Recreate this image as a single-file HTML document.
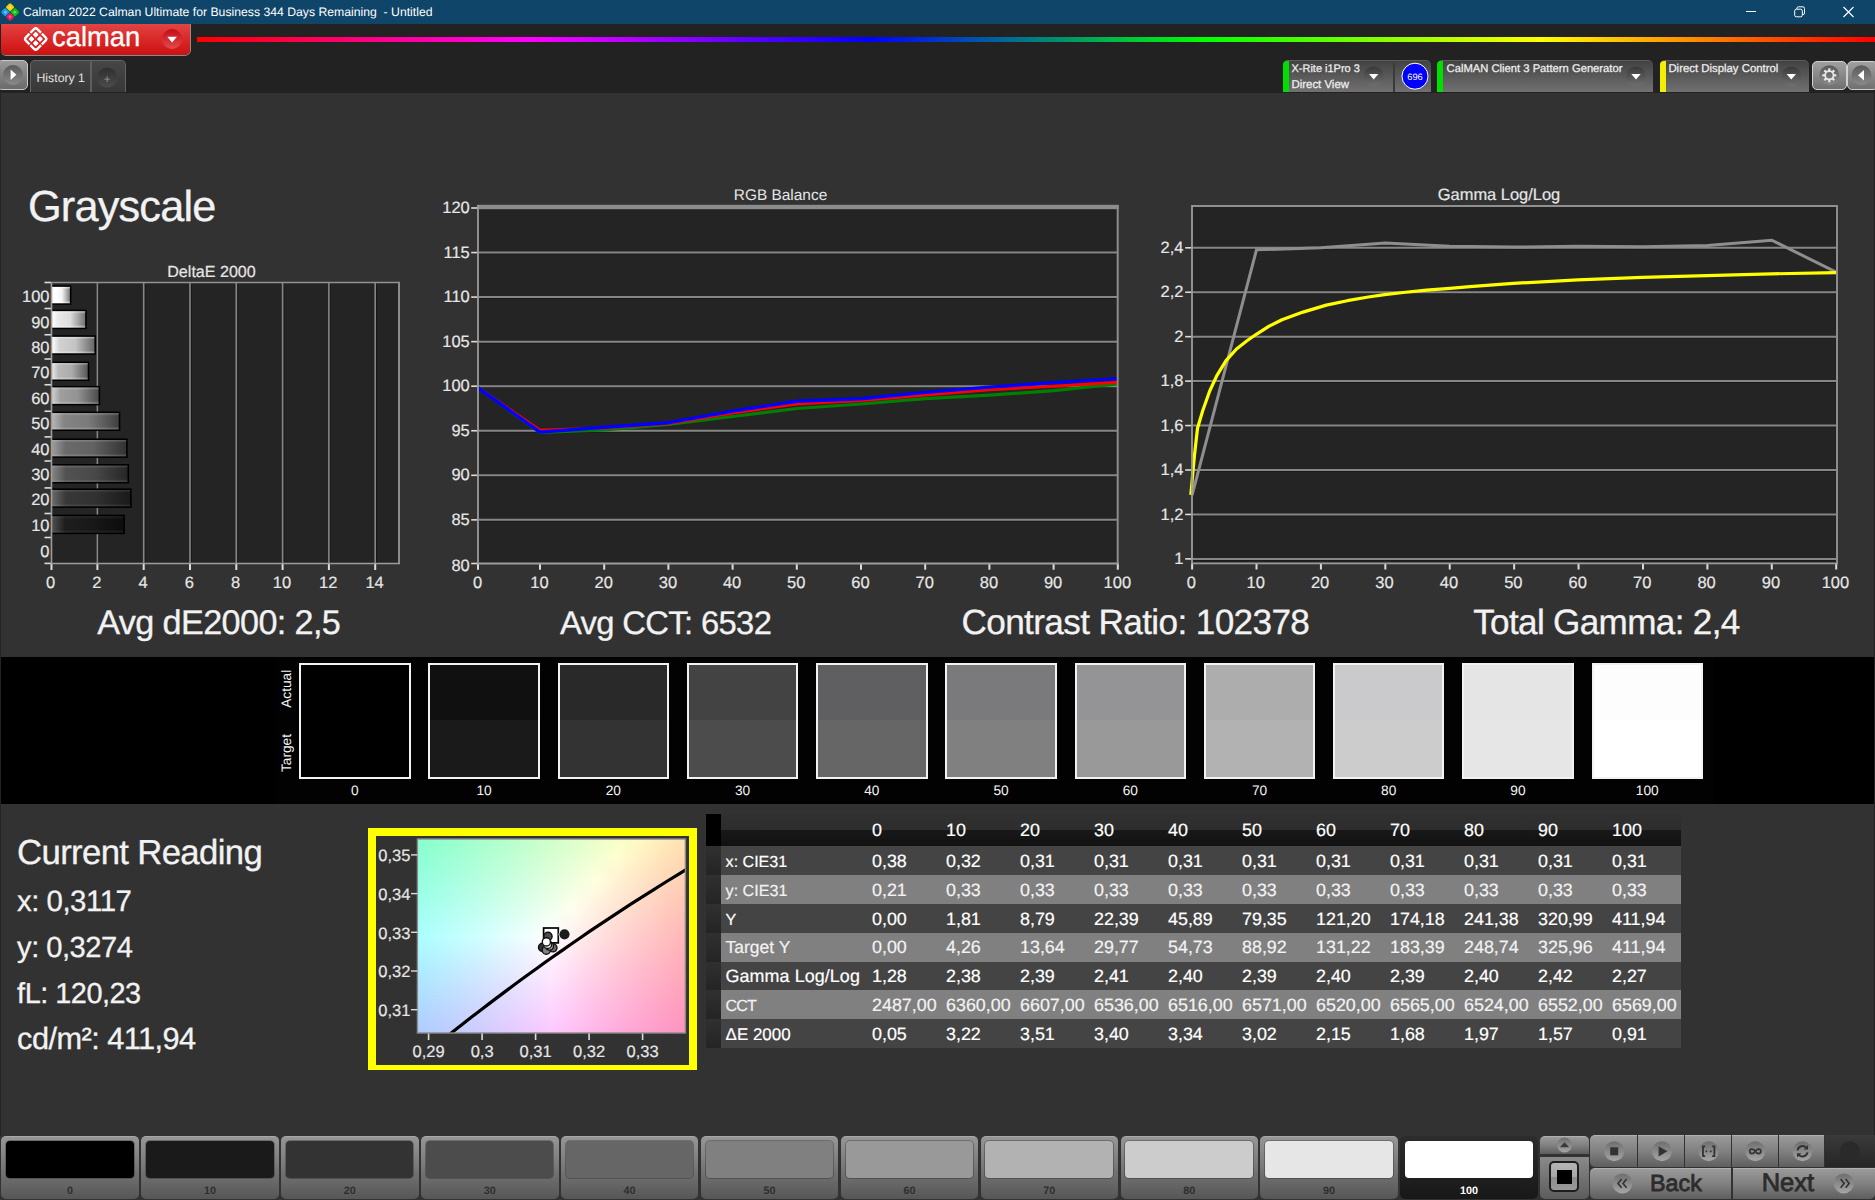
<!DOCTYPE html>
<html lang="en"><head><meta charset="utf-8"><title>Calman 2022 - Grayscale</title>
<style>
html,body{margin:0;padding:0;background:#323232;}
body{width:1875px;height:1200px;overflow:hidden;position:relative;font-family:"Liberation Sans",sans-serif;text-rendering:geometricPrecision;}
#app{position:absolute;left:0;top:0;width:1875px;height:1200px;overflow:hidden;}
#app div{position:absolute;}
.t{position:absolute;white-space:nowrap;line-height:1;}
#gfx{position:absolute;left:0;top:0;font-family:"Liberation Sans",sans-serif;}
#gfx text{white-space:pre;}
</style></head>
<body><div id="app">
<div class="titlebar" style="left:0.00px;top:0.00px;width:1875.00px;height:24.00px;background:#0f4568;"></div>
<div class="toolbar" style="left:0.00px;top:24.00px;width:1875.00px;height:69.00px;background:#222222;"></div>
<div style="left:197.00px;top:36.90px;width:1678.00px;height:5.60px;background:linear-gradient(90deg,#ff0000 0%,#ff00ff 20%,#0000ff 40%,#00ff00 60%,#ffff00 80%,#ff0000 100%);"></div>
<div class="logo-btn" style="left:1.00px;top:24.00px;width:188.60px;height:31.30px;background:linear-gradient(180deg,#e24444 0%,#da2a2a 45%,#cc1212 100%);border-radius:0 0 5px 5px;box-shadow:0 1px 0 #808c92, 1px 0 0 #9a8888;"></div>
<div style="left:-3.00px;top:60.00px;width:31.00px;height:29.50px;background:linear-gradient(180deg,#9a9a9a,#6a6a6a);border-radius:5px;border:1px solid #c8c8c8;box-sizing:border-box;"></div>
<div style="left:29.80px;top:59.80px;width:96.50px;height:32.40px;background:linear-gradient(180deg,#464646 0%,#383838 100%);border-radius:5px 5px 0 0;border:1px solid #646464;border-bottom:none;box-sizing:border-box;"></div>
<div style="left:90.00px;top:60.50px;width:1.60px;height:31.50px;background:#5e5e5e;"></div>
<div style="left:1282.50px;top:60.00px;width:148.00px;height:32.00px;background:linear-gradient(180deg,#424242 0%,#5a5a5a 50%,#717171 100%);border-radius:5px 5px 0 0;border-top:1px solid #5c5c5c;box-sizing:border-box;"></div>
<div style="left:1282.50px;top:60.50px;width:6.00px;height:31.50px;background:#00e000;border-radius:4px 0 0 0;"></div>
<div style="left:1393.00px;top:63.00px;width:1.50px;height:29.00px;background:#3a3a3a;"></div>
<div style="left:1437.20px;top:60.00px;width:216.00px;height:32.00px;background:linear-gradient(180deg,#424242 0%,#5a5a5a 50%,#717171 100%);border-radius:5px 5px 0 0;border-top:1px solid #5c5c5c;box-sizing:border-box;"></div>
<div style="left:1437.20px;top:60.50px;width:6.00px;height:31.50px;background:#00e000;border-radius:4px 0 0 0;"></div>
<div style="left:1660.00px;top:60.00px;width:148.50px;height:32.00px;background:linear-gradient(180deg,#424242 0%,#5a5a5a 50%,#717171 100%);border-radius:5px 5px 0 0;border-top:1px solid #5c5c5c;box-sizing:border-box;"></div>
<div style="left:1660.00px;top:60.50px;width:6.00px;height:31.50px;background:#f0f000;border-radius:4px 0 0 0;"></div>
<div style="left:1812.00px;top:60.50px;width:35.00px;height:29.50px;background:linear-gradient(180deg,#a0a0a0,#707070);border-radius:5px;border:1px solid #d0d0d0;box-sizing:border-box;"></div>
<div style="left:1847.00px;top:60.50px;width:31.00px;height:29.50px;background:linear-gradient(180deg,#a0a0a0,#707070);border-radius:5px;border:1px solid #d0d0d0;box-sizing:border-box;"></div>
<div class="content" style="left:0.00px;top:93.00px;width:1875.00px;height:1043.00px;background:#323232;border-left:1px solid #242424;border-right:1px solid #222222;box-sizing:border-box;"></div>
<div class="strip" style="left:1.00px;top:656.70px;width:1873.00px;height:147.30px;background:#000000;"></div>
<div style="left:276.00px;top:657.00px;width:1437.50px;height:147.00px;background:#020202;"></div>
<div class="patch" style="left:299.20px;top:663.00px;width:111.40px;height:115.60px;background:linear-gradient(180deg,#000000 0%,#000000 49.5%,#000000 49.5%,#000000 100%);border:2px solid #f2f2f2;box-sizing:border-box;"></div>
<div class="patch" style="left:428.43px;top:663.00px;width:111.40px;height:115.60px;background:linear-gradient(180deg,#101010 0%,#101010 49.5%,#1a1a1a 49.5%,#1a1a1a 100%);border:2px solid #f2f2f2;box-sizing:border-box;"></div>
<div class="patch" style="left:557.66px;top:663.00px;width:111.40px;height:115.60px;background:linear-gradient(180deg,#292929 0%,#292929 49.5%,#333333 49.5%,#333333 100%);border:2px solid #f2f2f2;box-sizing:border-box;"></div>
<div class="patch" style="left:686.89px;top:663.00px;width:111.40px;height:115.60px;background:linear-gradient(180deg,#434343 0%,#434343 49.5%,#4c4c4c 49.5%,#4c4c4c 100%);border:2px solid #f2f2f2;box-sizing:border-box;"></div>
<div class="patch" style="left:816.12px;top:663.00px;width:111.40px;height:115.60px;background:linear-gradient(180deg,#5f5f61 0%,#5f5f61 49.5%,#666666 49.5%,#666666 100%);border:2px solid #f2f2f2;box-sizing:border-box;"></div>
<div class="patch" style="left:945.35px;top:663.00px;width:111.40px;height:115.60px;background:linear-gradient(180deg,#7a7a7c 0%,#7a7a7c 49.5%,#808080 49.5%,#808080 100%);border:2px solid #f2f2f2;box-sizing:border-box;"></div>
<div class="patch" style="left:1074.58px;top:663.00px;width:111.40px;height:115.60px;background:linear-gradient(180deg,#949496 0%,#949496 49.5%,#999999 49.5%,#999999 100%);border:2px solid #f2f2f2;box-sizing:border-box;"></div>
<div class="patch" style="left:1203.81px;top:663.00px;width:111.40px;height:115.60px;background:linear-gradient(180deg,#adadad 0%,#adadad 49.5%,#b2b2b2 49.5%,#b2b2b2 100%);border:2px solid #f2f2f2;box-sizing:border-box;"></div>
<div class="patch" style="left:1333.04px;top:663.00px;width:111.40px;height:115.60px;background:linear-gradient(180deg,#cac9cb 0%,#cac9cb 49.5%,#cccccc 49.5%,#cccccc 100%);border:2px solid #f2f2f2;box-sizing:border-box;"></div>
<div class="patch" style="left:1462.27px;top:663.00px;width:111.40px;height:115.60px;background:linear-gradient(180deg,#e5e5e6 0%,#e5e5e6 49.5%,#e6e6e6 49.5%,#e6e6e6 100%);border:2px solid #f2f2f2;box-sizing:border-box;"></div>
<div class="patch" style="left:1591.50px;top:663.00px;width:111.40px;height:115.60px;background:linear-gradient(180deg,#fdfdfd 0%,#fdfdfd 49.5%,#ffffff 49.5%,#ffffff 100%);border:2px solid #f2f2f2;box-sizing:border-box;"></div>
<div class="cie-frame" style="left:368.00px;top:828.20px;width:328.80px;height:241.70px;background:#323232;border:solid #ffff00;border-width:8.2px 8.2px 5.2px 8.2px;box-sizing:border-box;"></div>
<div class="thead" style="left:705.60px;top:814.00px;width:975.70px;height:31.80px;background:linear-gradient(180deg,#303030 0%,#2d2d2d 50%,#181818 51%,#111111 100%);"></div>
<div style="left:705.60px;top:814.00px;width:15.40px;height:31.80px;background:#000;"></div>
<div class="trow" style="left:705.60px;top:845.80px;width:975.70px;height:28.93px;background:#444444;"></div>
<div style="left:705.60px;top:845.80px;width:15.40px;height:28.93px;background:linear-gradient(180deg,#303030,#242424);"></div>
<div class="trow" style="left:705.60px;top:874.73px;width:975.70px;height:28.93px;background:#808080;"></div>
<div style="left:705.60px;top:874.73px;width:15.40px;height:28.93px;background:linear-gradient(180deg,#303030,#242424);"></div>
<div class="trow" style="left:705.60px;top:903.66px;width:975.70px;height:28.93px;background:#444444;"></div>
<div style="left:705.60px;top:903.66px;width:15.40px;height:28.93px;background:linear-gradient(180deg,#303030,#242424);"></div>
<div class="trow" style="left:705.60px;top:932.59px;width:975.70px;height:28.93px;background:#808080;"></div>
<div style="left:705.60px;top:932.59px;width:15.40px;height:28.93px;background:linear-gradient(180deg,#303030,#242424);"></div>
<div class="trow" style="left:705.60px;top:961.51px;width:975.70px;height:28.93px;background:#444444;"></div>
<div style="left:705.60px;top:961.51px;width:15.40px;height:28.93px;background:linear-gradient(180deg,#303030,#242424);"></div>
<div class="trow" style="left:705.60px;top:990.44px;width:975.70px;height:28.93px;background:#808080;"></div>
<div style="left:705.60px;top:990.44px;width:15.40px;height:28.93px;background:linear-gradient(180deg,#303030,#242424);"></div>
<div class="trow" style="left:705.60px;top:1019.37px;width:975.70px;height:28.93px;background:#444444;"></div>
<div style="left:705.60px;top:1019.37px;width:15.40px;height:28.93px;background:linear-gradient(180deg,#303030,#242424);"></div>
<div class="sw" style="left:1.30px;top:1135.50px;width:137.60px;height:63.20px;background:linear-gradient(180deg,#969696 0%,#7a7a7a 45%,#565656 100%);border-radius:5px;border-top:1px solid #a8a8a8;box-sizing:border-box;"></div>
<div style="left:6.10px;top:1140.50px;width:127.50px;height:37.30px;background:#000000;border-radius:4px;box-shadow:0 0 0 1px rgba(0,0,0,.25);"></div>
<div class="sw" style="left:141.20px;top:1135.50px;width:137.60px;height:63.20px;background:linear-gradient(180deg,#969696 0%,#7a7a7a 45%,#565656 100%);border-radius:5px;border-top:1px solid #a8a8a8;box-sizing:border-box;"></div>
<div style="left:146.00px;top:1140.50px;width:127.50px;height:37.30px;background:#1a1a1a;border-radius:4px;box-shadow:0 0 0 1px rgba(0,0,0,.25);"></div>
<div class="sw" style="left:281.10px;top:1135.50px;width:137.60px;height:63.20px;background:linear-gradient(180deg,#969696 0%,#7a7a7a 45%,#565656 100%);border-radius:5px;border-top:1px solid #a8a8a8;box-sizing:border-box;"></div>
<div style="left:285.90px;top:1140.50px;width:127.50px;height:37.30px;background:#333333;border-radius:4px;box-shadow:0 0 0 1px rgba(0,0,0,.25);"></div>
<div class="sw" style="left:421.00px;top:1135.50px;width:137.60px;height:63.20px;background:linear-gradient(180deg,#969696 0%,#7a7a7a 45%,#565656 100%);border-radius:5px;border-top:1px solid #a8a8a8;box-sizing:border-box;"></div>
<div style="left:425.80px;top:1140.50px;width:127.50px;height:37.30px;background:#4c4c4c;border-radius:4px;box-shadow:0 0 0 1px rgba(0,0,0,.25);"></div>
<div class="sw" style="left:560.90px;top:1135.50px;width:137.60px;height:63.20px;background:linear-gradient(180deg,#969696 0%,#7a7a7a 45%,#565656 100%);border-radius:5px;border-top:1px solid #a8a8a8;box-sizing:border-box;"></div>
<div style="left:565.70px;top:1140.50px;width:127.50px;height:37.30px;background:#666666;border-radius:4px;box-shadow:0 0 0 1px rgba(0,0,0,.25);"></div>
<div class="sw" style="left:700.80px;top:1135.50px;width:137.60px;height:63.20px;background:linear-gradient(180deg,#969696 0%,#7a7a7a 45%,#565656 100%);border-radius:5px;border-top:1px solid #a8a8a8;box-sizing:border-box;"></div>
<div style="left:705.60px;top:1140.50px;width:127.50px;height:37.30px;background:#808080;border-radius:4px;box-shadow:0 0 0 1px rgba(0,0,0,.25);"></div>
<div class="sw" style="left:840.70px;top:1135.50px;width:137.60px;height:63.20px;background:linear-gradient(180deg,#969696 0%,#7a7a7a 45%,#565656 100%);border-radius:5px;border-top:1px solid #a8a8a8;box-sizing:border-box;"></div>
<div style="left:845.50px;top:1140.50px;width:127.50px;height:37.30px;background:#999999;border-radius:4px;box-shadow:0 0 0 1px rgba(0,0,0,.25);"></div>
<div class="sw" style="left:980.60px;top:1135.50px;width:137.60px;height:63.20px;background:linear-gradient(180deg,#969696 0%,#7a7a7a 45%,#565656 100%);border-radius:5px;border-top:1px solid #a8a8a8;box-sizing:border-box;"></div>
<div style="left:985.40px;top:1140.50px;width:127.50px;height:37.30px;background:#b2b2b2;border-radius:4px;box-shadow:0 0 0 1px rgba(0,0,0,.25);"></div>
<div class="sw" style="left:1120.50px;top:1135.50px;width:137.60px;height:63.20px;background:linear-gradient(180deg,#969696 0%,#7a7a7a 45%,#565656 100%);border-radius:5px;border-top:1px solid #a8a8a8;box-sizing:border-box;"></div>
<div style="left:1125.30px;top:1140.50px;width:127.50px;height:37.30px;background:#cccccc;border-radius:4px;box-shadow:0 0 0 1px rgba(0,0,0,.25);"></div>
<div class="sw" style="left:1260.40px;top:1135.50px;width:137.60px;height:63.20px;background:linear-gradient(180deg,#969696 0%,#7a7a7a 45%,#565656 100%);border-radius:5px;border-top:1px solid #a8a8a8;box-sizing:border-box;"></div>
<div style="left:1265.20px;top:1140.50px;width:127.50px;height:37.30px;background:#e6e6e6;border-radius:4px;box-shadow:0 0 0 1px rgba(0,0,0,.25);"></div>
<div class="sw sel" style="left:1400.30px;top:1135.50px;width:137.60px;height:63.20px;background:linear-gradient(180deg,#2c2c2c,#181818);border-radius:5px;"></div>
<div style="left:1405.10px;top:1140.50px;width:127.50px;height:37.30px;background:#ffffff;border-radius:4px;"></div>
<div style="left:1539.50px;top:1136.00px;width:49.50px;height:18.00px;background:linear-gradient(180deg,#9a9a9a 0%,#808080 50%,#5e5e5e 100%);border-radius:5px 5px 0 0;border-top:1px solid #b0b0b0;box-sizing:border-box;"></div>
<div style="left:1539.50px;top:1156.50px;width:49.50px;height:42.20px;background:linear-gradient(180deg,#8a8a8a,#5c5c5c);border-radius:0 0 5px 5px;"></div>
<div style="left:1548.60px;top:1161.30px;width:30.80px;height:30.80px;background:linear-gradient(180deg,#b4b4b4 0%,#a8a8a8 50%,#8c8c8c 51%,#9a9a9a 100%);border-radius:5px;border:2px solid #1e1e1e;box-sizing:border-box;"></div>
<div style="left:1557.00px;top:1170.30px;width:15.20px;height:13.80px;background:#000;"></div>
<div style="left:1590.30px;top:1135.00px;width:46.90px;height:31.50px;background:linear-gradient(180deg,#9a9a9a 0%,#808080 50%,#5e5e5e 100%);border-top:1px solid #b0b0b0;box-sizing:border-box;border-radius:5px 0 0 5px;"></div>
<div style="left:1638.40px;top:1135.00px;width:45.40px;height:31.50px;background:linear-gradient(180deg,#9a9a9a 0%,#808080 50%,#5e5e5e 100%);border-top:1px solid #b0b0b0;box-sizing:border-box;"></div>
<div style="left:1685.00px;top:1135.00px;width:45.50px;height:31.50px;background:linear-gradient(180deg,#9a9a9a 0%,#808080 50%,#5e5e5e 100%);border-top:1px solid #b0b0b0;box-sizing:border-box;"></div>
<div style="left:1731.70px;top:1135.00px;width:46.00px;height:31.50px;background:linear-gradient(180deg,#9a9a9a 0%,#808080 50%,#5e5e5e 100%);border-top:1px solid #b0b0b0;box-sizing:border-box;"></div>
<div style="left:1778.90px;top:1135.00px;width:45.00px;height:31.50px;background:linear-gradient(180deg,#9a9a9a 0%,#808080 50%,#5e5e5e 100%);border-top:1px solid #b0b0b0;box-sizing:border-box;"></div>
<div style="left:1825.10px;top:1135.00px;width:50.00px;height:31.50px;background:linear-gradient(180deg,#3a3a3a,#262626);"></div>
<div style="left:1590.30px;top:1168.20px;width:141.20px;height:30.60px;background:linear-gradient(180deg,#9a9a9a 0%,#808080 50%,#5e5e5e 100%);border-top:1px solid #b0b0b0;box-sizing:border-box;border-radius:5px 0 0 5px;"></div>
<div style="left:1733.00px;top:1168.20px;width:142.00px;height:30.60px;background:linear-gradient(180deg,#9a9a9a 0%,#808080 50%,#5e5e5e 100%);border-top:1px solid #b0b0b0;box-sizing:border-box;border-radius:0 0 5px 0;"></div>
<svg id="gfx" width="1875" height="1200" viewBox="0 0 1875 1200" ><defs><linearGradient id="gdd" x1="0" y1="0" x2="0" y2="1"><stop offset="0" stop-color="#c40d1a"/><stop offset="1" stop-color="#e24a4a"/></linearGradient><linearGradient id="gpc" x1="0" y1="0" x2="0" y2="1"><stop offset="0" stop-color="#5a5a5a"/><stop offset="1" stop-color="#8a8a8a"/></linearGradient><linearGradient id="gpl" x1="0" y1="0" x2="0" y2="1"><stop offset="0" stop-color="#2f2f2f"/><stop offset="1" stop-color="#4c4c4c"/></linearGradient><linearGradient id="gpc2" x1="0" y1="0" x2="0" y2="1"><stop offset="0" stop-color="#383838"/><stop offset="1" stop-color="#707070"/></linearGradient><linearGradient id="bevel" x1="0" y1="0" x2="0" y2="1"><stop offset="0" stop-color="#fff" stop-opacity="0.9"/><stop offset="0.16" stop-color="#fff" stop-opacity="0"/><stop offset="0.84" stop-color="#fff" stop-opacity="0"/><stop offset="1" stop-color="#fff" stop-opacity="0.9"/></linearGradient><linearGradient id="bg0" x1="0" y1="0" x2="1" y2="0"><stop offset="0" stop-color="#373737"/><stop offset="0.18" stop-color="#050505"/><stop offset="0.55" stop-color="#000000"/><stop offset="1" stop-color="#000000"/></linearGradient><linearGradient id="bg10" x1="0" y1="0" x2="1" y2="0"><stop offset="0" stop-color="#505050"/><stop offset="0.18" stop-color="#1e1e1e"/><stop offset="0.55" stop-color="#181818"/><stop offset="1" stop-color="#0d0d0d"/></linearGradient><linearGradient id="bg20" x1="0" y1="0" x2="1" y2="0"><stop offset="0" stop-color="#6a6a6a"/><stop offset="0.18" stop-color="#383838"/><stop offset="0.55" stop-color="#313131"/><stop offset="1" stop-color="#1a1a1a"/></linearGradient><linearGradient id="bg30" x1="0" y1="0" x2="1" y2="0"><stop offset="0" stop-color="#848484"/><stop offset="0.18" stop-color="#525252"/><stop offset="0.55" stop-color="#494949"/><stop offset="1" stop-color="#262626"/></linearGradient><linearGradient id="bg40" x1="0" y1="0" x2="1" y2="0"><stop offset="0" stop-color="#9d9d9d"/><stop offset="0.18" stop-color="#6b6b6b"/><stop offset="0.55" stop-color="#626262"/><stop offset="1" stop-color="#333333"/></linearGradient><linearGradient id="bg50" x1="0" y1="0" x2="1" y2="0"><stop offset="0" stop-color="#b6b6b6"/><stop offset="0.18" stop-color="#848484"/><stop offset="0.55" stop-color="#7a7a7a"/><stop offset="1" stop-color="#404040"/></linearGradient><linearGradient id="bg60" x1="0" y1="0" x2="1" y2="0"><stop offset="0" stop-color="#d0d0d0"/><stop offset="0.18" stop-color="#9e9e9e"/><stop offset="0.55" stop-color="#939393"/><stop offset="1" stop-color="#4c4c4c"/></linearGradient><linearGradient id="bg70" x1="0" y1="0" x2="1" y2="0"><stop offset="0" stop-color="#eaeaea"/><stop offset="0.18" stop-color="#b8b8b8"/><stop offset="0.55" stop-color="#ababab"/><stop offset="1" stop-color="#595959"/></linearGradient><linearGradient id="bg80" x1="0" y1="0" x2="1" y2="0"><stop offset="0" stop-color="#ffffff"/><stop offset="0.18" stop-color="#d1d1d1"/><stop offset="0.55" stop-color="#c4c4c4"/><stop offset="1" stop-color="#666666"/></linearGradient><linearGradient id="bg90" x1="0" y1="0" x2="1" y2="0"><stop offset="0" stop-color="#ffffff"/><stop offset="0.18" stop-color="#eaeaea"/><stop offset="0.55" stop-color="#dcdcdc"/><stop offset="1" stop-color="#737373"/></linearGradient><linearGradient id="bg100" x1="0" y1="0" x2="1" y2="0"><stop offset="0" stop-color="#ffffff"/><stop offset="0.18" stop-color="#ffffff"/><stop offset="0.55" stop-color="#f5f5f5"/><stop offset="1" stop-color="#808080"/></linearGradient><clipPath id="rclip"><rect x="477.7" y="207.8" width="640.0" height="355.7"/></clipPath><linearGradient id="c0"><stop offset="0.0000" stop-color="#87ffce"/><stop offset="0.0833" stop-color="#92ffce"/><stop offset="0.1667" stop-color="#9effcd"/><stop offset="0.2500" stop-color="#aaffcd"/><stop offset="0.3333" stop-color="#b6ffcc"/><stop offset="0.4167" stop-color="#c3ffcc"/><stop offset="0.5000" stop-color="#d0ffcb"/><stop offset="0.5833" stop-color="#ddffcb"/><stop offset="0.6667" stop-color="#eaffca"/><stop offset="0.7500" stop-color="#f8ffc9"/><stop offset="0.8333" stop-color="#fff8c3"/><stop offset="0.9167" stop-color="#ffebb9"/><stop offset="1.0000" stop-color="#ffdfaf"/></linearGradient><linearGradient id="c1"><stop offset="0.0000" stop-color="#88ffd0"/><stop offset="0.0833" stop-color="#94ffd0"/><stop offset="0.1667" stop-color="#9fffcf"/><stop offset="0.2500" stop-color="#abffcf"/><stop offset="0.3333" stop-color="#b8ffce"/><stop offset="0.4167" stop-color="#c4ffce"/><stop offset="0.5000" stop-color="#d1ffcd"/><stop offset="0.5833" stop-color="#dfffcc"/><stop offset="0.6667" stop-color="#ecffcc"/><stop offset="0.7500" stop-color="#faffcb"/><stop offset="0.8333" stop-color="#fff6c4"/><stop offset="0.9167" stop-color="#ffe9b9"/><stop offset="1.0000" stop-color="#ffdeaf"/></linearGradient><linearGradient id="c2"><stop offset="0.0000" stop-color="#89ffd2"/><stop offset="0.0833" stop-color="#95ffd1"/><stop offset="0.1667" stop-color="#a1ffd1"/><stop offset="0.2500" stop-color="#adffd0"/><stop offset="0.3333" stop-color="#b9ffd0"/><stop offset="0.4167" stop-color="#c6ffcf"/><stop offset="0.5000" stop-color="#d3ffcf"/><stop offset="0.5833" stop-color="#e0ffce"/><stop offset="0.6667" stop-color="#eeffce"/><stop offset="0.7500" stop-color="#fcffcd"/><stop offset="0.8333" stop-color="#fff4c4"/><stop offset="0.9167" stop-color="#ffe7b9"/><stop offset="1.0000" stop-color="#ffdcaf"/></linearGradient><linearGradient id="c3"><stop offset="0.0000" stop-color="#8bffd4"/><stop offset="0.0833" stop-color="#96ffd3"/><stop offset="0.1667" stop-color="#a2ffd3"/><stop offset="0.2500" stop-color="#afffd2"/><stop offset="0.3333" stop-color="#bbffd2"/><stop offset="0.4167" stop-color="#c8ffd1"/><stop offset="0.5000" stop-color="#d5ffd1"/><stop offset="0.5833" stop-color="#e2ffd0"/><stop offset="0.6667" stop-color="#f0ffd0"/><stop offset="0.7500" stop-color="#feffcf"/><stop offset="0.8333" stop-color="#fff2c4"/><stop offset="0.9167" stop-color="#ffe6ba"/><stop offset="1.0000" stop-color="#ffdab0"/></linearGradient><linearGradient id="c4"><stop offset="0.0000" stop-color="#8cffd6"/><stop offset="0.0833" stop-color="#98ffd5"/><stop offset="0.1667" stop-color="#a4ffd5"/><stop offset="0.2500" stop-color="#b0ffd4"/><stop offset="0.3333" stop-color="#bdffd4"/><stop offset="0.4167" stop-color="#caffd3"/><stop offset="0.5000" stop-color="#d7ffd3"/><stop offset="0.5833" stop-color="#e4ffd2"/><stop offset="0.6667" stop-color="#f2ffd2"/><stop offset="0.7500" stop-color="#fffed0"/><stop offset="0.8333" stop-color="#fff0c5"/><stop offset="0.9167" stop-color="#ffe4ba"/><stop offset="1.0000" stop-color="#ffd8b0"/></linearGradient><linearGradient id="c5"><stop offset="0.0000" stop-color="#8dffd8"/><stop offset="0.0833" stop-color="#99ffd7"/><stop offset="0.1667" stop-color="#a5ffd7"/><stop offset="0.2500" stop-color="#b2ffd6"/><stop offset="0.3333" stop-color="#beffd6"/><stop offset="0.4167" stop-color="#cbffd5"/><stop offset="0.5000" stop-color="#d9ffd5"/><stop offset="0.5833" stop-color="#e6ffd4"/><stop offset="0.6667" stop-color="#f4ffd4"/><stop offset="0.7500" stop-color="#fffcd1"/><stop offset="0.8333" stop-color="#ffeec5"/><stop offset="0.9167" stop-color="#ffe2ba"/><stop offset="1.0000" stop-color="#ffd6b0"/></linearGradient><linearGradient id="c6"><stop offset="0.0000" stop-color="#8fffd9"/><stop offset="0.0833" stop-color="#9bffd9"/><stop offset="0.1667" stop-color="#a7ffd9"/><stop offset="0.2500" stop-color="#b3ffd8"/><stop offset="0.3333" stop-color="#c0ffd8"/><stop offset="0.4167" stop-color="#cdffd7"/><stop offset="0.5000" stop-color="#dbffd7"/><stop offset="0.5833" stop-color="#e8ffd7"/><stop offset="0.6667" stop-color="#f6ffd6"/><stop offset="0.7500" stop-color="#fff9d1"/><stop offset="0.8333" stop-color="#ffecc5"/><stop offset="0.9167" stop-color="#ffe0bb"/><stop offset="1.0000" stop-color="#ffd5b1"/></linearGradient><linearGradient id="c7"><stop offset="0.0000" stop-color="#90ffdb"/><stop offset="0.0833" stop-color="#9cffdb"/><stop offset="0.1667" stop-color="#a8ffdb"/><stop offset="0.2500" stop-color="#b5ffda"/><stop offset="0.3333" stop-color="#c2ffda"/><stop offset="0.4167" stop-color="#cfffd9"/><stop offset="0.5000" stop-color="#ddffd9"/><stop offset="0.5833" stop-color="#eaffd9"/><stop offset="0.6667" stop-color="#f8ffd8"/><stop offset="0.7500" stop-color="#fff7d1"/><stop offset="0.8333" stop-color="#ffeac6"/><stop offset="0.9167" stop-color="#ffdebb"/><stop offset="1.0000" stop-color="#ffd3b1"/></linearGradient><linearGradient id="c8"><stop offset="0.0000" stop-color="#92ffdd"/><stop offset="0.0833" stop-color="#9effdd"/><stop offset="0.1667" stop-color="#aaffdd"/><stop offset="0.2500" stop-color="#b7ffdc"/><stop offset="0.3333" stop-color="#c4ffdc"/><stop offset="0.4167" stop-color="#d1ffdb"/><stop offset="0.5000" stop-color="#deffdb"/><stop offset="0.5833" stop-color="#ecffdb"/><stop offset="0.6667" stop-color="#fbffda"/><stop offset="0.7500" stop-color="#fff5d2"/><stop offset="0.8333" stop-color="#ffe8c6"/><stop offset="0.9167" stop-color="#ffdcbb"/><stop offset="1.0000" stop-color="#ffd1b2"/></linearGradient><linearGradient id="c9"><stop offset="0.0000" stop-color="#93ffdf"/><stop offset="0.0833" stop-color="#9fffdf"/><stop offset="0.1667" stop-color="#acffdf"/><stop offset="0.2500" stop-color="#b8ffde"/><stop offset="0.3333" stop-color="#c5ffde"/><stop offset="0.4167" stop-color="#d3ffde"/><stop offset="0.5000" stop-color="#e0ffdd"/><stop offset="0.5833" stop-color="#eeffdd"/><stop offset="0.6667" stop-color="#fdffdc"/><stop offset="0.7500" stop-color="#fff3d2"/><stop offset="0.8333" stop-color="#ffe6c6"/><stop offset="0.9167" stop-color="#ffdabc"/><stop offset="1.0000" stop-color="#ffcfb2"/></linearGradient><linearGradient id="c10"><stop offset="0.0000" stop-color="#95ffe1"/><stop offset="0.0833" stop-color="#a1ffe1"/><stop offset="0.1667" stop-color="#adffe1"/><stop offset="0.2500" stop-color="#baffe0"/><stop offset="0.3333" stop-color="#c7ffe0"/><stop offset="0.4167" stop-color="#d5ffe0"/><stop offset="0.5000" stop-color="#e2ffdf"/><stop offset="0.5833" stop-color="#f0ffdf"/><stop offset="0.6667" stop-color="#ffffdf"/><stop offset="0.7500" stop-color="#fff1d2"/><stop offset="0.8333" stop-color="#ffe4c7"/><stop offset="0.9167" stop-color="#ffd9bc"/><stop offset="1.0000" stop-color="#ffceb2"/></linearGradient><linearGradient id="c11"><stop offset="0.0000" stop-color="#96ffe3"/><stop offset="0.0833" stop-color="#a2ffe3"/><stop offset="0.1667" stop-color="#afffe3"/><stop offset="0.2500" stop-color="#bcffe2"/><stop offset="0.3333" stop-color="#c9ffe2"/><stop offset="0.4167" stop-color="#d7ffe2"/><stop offset="0.5000" stop-color="#e4ffe1"/><stop offset="0.5833" stop-color="#f3ffe1"/><stop offset="0.6667" stop-color="#fffddf"/><stop offset="0.7500" stop-color="#ffefd2"/><stop offset="0.8333" stop-color="#ffe2c7"/><stop offset="0.9167" stop-color="#ffd7bc"/><stop offset="1.0000" stop-color="#ffccb3"/></linearGradient><linearGradient id="c12"><stop offset="0.0000" stop-color="#97ffe5"/><stop offset="0.0833" stop-color="#a4ffe5"/><stop offset="0.1667" stop-color="#b1ffe5"/><stop offset="0.2500" stop-color="#beffe4"/><stop offset="0.3333" stop-color="#cbffe4"/><stop offset="0.4167" stop-color="#d8ffe4"/><stop offset="0.5000" stop-color="#e6ffe4"/><stop offset="0.5833" stop-color="#f5ffe3"/><stop offset="0.6667" stop-color="#fffbdf"/><stop offset="0.7500" stop-color="#ffedd3"/><stop offset="0.8333" stop-color="#ffe1c7"/><stop offset="0.9167" stop-color="#ffd5bd"/><stop offset="1.0000" stop-color="#ffcab3"/></linearGradient><linearGradient id="c13"><stop offset="0.0000" stop-color="#99ffe7"/><stop offset="0.0833" stop-color="#a5ffe7"/><stop offset="0.1667" stop-color="#b2ffe7"/><stop offset="0.2500" stop-color="#bfffe7"/><stop offset="0.3333" stop-color="#cdffe6"/><stop offset="0.4167" stop-color="#daffe6"/><stop offset="0.5000" stop-color="#e8ffe6"/><stop offset="0.5833" stop-color="#f7ffe6"/><stop offset="0.6667" stop-color="#fff9df"/><stop offset="0.7500" stop-color="#ffebd3"/><stop offset="0.8333" stop-color="#ffdfc8"/><stop offset="0.9167" stop-color="#ffd3bd"/><stop offset="1.0000" stop-color="#ffc9b3"/></linearGradient><linearGradient id="c14"><stop offset="0.0000" stop-color="#9affe9"/><stop offset="0.0833" stop-color="#a7ffe9"/><stop offset="0.1667" stop-color="#b4ffe9"/><stop offset="0.2500" stop-color="#c1ffe9"/><stop offset="0.3333" stop-color="#cfffe8"/><stop offset="0.4167" stop-color="#dcffe8"/><stop offset="0.5000" stop-color="#eaffe8"/><stop offset="0.5833" stop-color="#f9ffe8"/><stop offset="0.6667" stop-color="#fff6e0"/><stop offset="0.7500" stop-color="#ffe9d3"/><stop offset="0.8333" stop-color="#ffddc8"/><stop offset="0.9167" stop-color="#ffd1bd"/><stop offset="1.0000" stop-color="#ffc7b4"/></linearGradient><linearGradient id="c15"><stop offset="0.0000" stop-color="#9cffeb"/><stop offset="0.0833" stop-color="#a9ffeb"/><stop offset="0.1667" stop-color="#b6ffeb"/><stop offset="0.2500" stop-color="#c3ffeb"/><stop offset="0.3333" stop-color="#d0ffeb"/><stop offset="0.4167" stop-color="#deffea"/><stop offset="0.5000" stop-color="#edffea"/><stop offset="0.5833" stop-color="#fbffea"/><stop offset="0.6667" stop-color="#fff4e0"/><stop offset="0.7500" stop-color="#ffe7d4"/><stop offset="0.8333" stop-color="#ffdbc8"/><stop offset="0.9167" stop-color="#ffd0be"/><stop offset="1.0000" stop-color="#ffc5b4"/></linearGradient><linearGradient id="c16"><stop offset="0.0000" stop-color="#9effee"/><stop offset="0.0833" stop-color="#aaffed"/><stop offset="0.1667" stop-color="#b7ffed"/><stop offset="0.2500" stop-color="#c5ffed"/><stop offset="0.3333" stop-color="#d2ffed"/><stop offset="0.4167" stop-color="#e0ffed"/><stop offset="0.5000" stop-color="#efffec"/><stop offset="0.5833" stop-color="#fdffec"/><stop offset="0.6667" stop-color="#fff2e0"/><stop offset="0.7500" stop-color="#ffe5d4"/><stop offset="0.8333" stop-color="#ffd9c8"/><stop offset="0.9167" stop-color="#ffcebe"/><stop offset="1.0000" stop-color="#ffc3b4"/></linearGradient><linearGradient id="c17"><stop offset="0.0000" stop-color="#9ffff0"/><stop offset="0.0833" stop-color="#acfff0"/><stop offset="0.1667" stop-color="#b9ffef"/><stop offset="0.2500" stop-color="#c6ffef"/><stop offset="0.3333" stop-color="#d4ffef"/><stop offset="0.4167" stop-color="#e2ffef"/><stop offset="0.5000" stop-color="#f1ffef"/><stop offset="0.5833" stop-color="#fffeee"/><stop offset="0.6667" stop-color="#fff0e1"/><stop offset="0.7500" stop-color="#ffe3d4"/><stop offset="0.8333" stop-color="#ffd7c9"/><stop offset="0.9167" stop-color="#ffccbe"/><stop offset="1.0000" stop-color="#ffc2b5"/></linearGradient><linearGradient id="c18"><stop offset="0.0000" stop-color="#a1fff2"/><stop offset="0.0833" stop-color="#aefff2"/><stop offset="0.1667" stop-color="#bbfff2"/><stop offset="0.2500" stop-color="#c8fff2"/><stop offset="0.3333" stop-color="#d6fff1"/><stop offset="0.4167" stop-color="#e4fff1"/><stop offset="0.5000" stop-color="#f3fff1"/><stop offset="0.5833" stop-color="#fffcee"/><stop offset="0.6667" stop-color="#ffeee1"/><stop offset="0.7500" stop-color="#ffe1d4"/><stop offset="0.8333" stop-color="#ffd5c9"/><stop offset="0.9167" stop-color="#ffcabf"/><stop offset="1.0000" stop-color="#ffc0b5"/></linearGradient><linearGradient id="c19"><stop offset="0.0000" stop-color="#a2fff4"/><stop offset="0.0833" stop-color="#affff4"/><stop offset="0.1667" stop-color="#bdfff4"/><stop offset="0.2500" stop-color="#cafff4"/><stop offset="0.3333" stop-color="#d8fff4"/><stop offset="0.4167" stop-color="#e6fff4"/><stop offset="0.5000" stop-color="#f5fff3"/><stop offset="0.5833" stop-color="#fffaef"/><stop offset="0.6667" stop-color="#ffece1"/><stop offset="0.7500" stop-color="#ffdfd5"/><stop offset="0.8333" stop-color="#ffd3c9"/><stop offset="0.9167" stop-color="#ffc9bf"/><stop offset="1.0000" stop-color="#ffbeb5"/></linearGradient><linearGradient id="c20"><stop offset="0.0000" stop-color="#a4fff6"/><stop offset="0.0833" stop-color="#b1fff6"/><stop offset="0.1667" stop-color="#befff6"/><stop offset="0.2500" stop-color="#ccfff6"/><stop offset="0.3333" stop-color="#dafff6"/><stop offset="0.4167" stop-color="#e9fff6"/><stop offset="0.5000" stop-color="#f7fff6"/><stop offset="0.5833" stop-color="#fff8ef"/><stop offset="0.6667" stop-color="#ffeae1"/><stop offset="0.7500" stop-color="#ffddd5"/><stop offset="0.8333" stop-color="#ffd2ca"/><stop offset="0.9167" stop-color="#ffc7bf"/><stop offset="1.0000" stop-color="#ffbdb6"/></linearGradient><linearGradient id="c21"><stop offset="0.0000" stop-color="#a5fff8"/><stop offset="0.0833" stop-color="#b3fff8"/><stop offset="0.1667" stop-color="#c0fff8"/><stop offset="0.2500" stop-color="#cefff8"/><stop offset="0.3333" stop-color="#dcfff8"/><stop offset="0.4167" stop-color="#ebfff8"/><stop offset="0.5000" stop-color="#fafff8"/><stop offset="0.5833" stop-color="#fff6ef"/><stop offset="0.6667" stop-color="#ffe8e2"/><stop offset="0.7500" stop-color="#ffdbd5"/><stop offset="0.8333" stop-color="#ffd0ca"/><stop offset="0.9167" stop-color="#ffc5c0"/><stop offset="1.0000" stop-color="#ffbbb6"/></linearGradient><linearGradient id="c22"><stop offset="0.0000" stop-color="#a7fffb"/><stop offset="0.0833" stop-color="#b4fffb"/><stop offset="0.1667" stop-color="#c2fffb"/><stop offset="0.2500" stop-color="#d0fffb"/><stop offset="0.3333" stop-color="#defffb"/><stop offset="0.4167" stop-color="#edfffb"/><stop offset="0.5000" stop-color="#fcfffb"/><stop offset="0.5833" stop-color="#fff3ef"/><stop offset="0.6667" stop-color="#ffe6e2"/><stop offset="0.7500" stop-color="#ffd9d6"/><stop offset="0.8333" stop-color="#ffceca"/><stop offset="0.9167" stop-color="#ffc3c0"/><stop offset="1.0000" stop-color="#ffbab6"/></linearGradient><linearGradient id="c23"><stop offset="0.0000" stop-color="#a9fffd"/><stop offset="0.0833" stop-color="#b6fffd"/><stop offset="0.1667" stop-color="#c4fffd"/><stop offset="0.2500" stop-color="#d2fffd"/><stop offset="0.3333" stop-color="#e0fffd"/><stop offset="0.4167" stop-color="#effffd"/><stop offset="0.5000" stop-color="#fefffd"/><stop offset="0.5833" stop-color="#fff1ef"/><stop offset="0.6667" stop-color="#ffe4e2"/><stop offset="0.7500" stop-color="#ffd7d6"/><stop offset="0.8333" stop-color="#ffcccb"/><stop offset="0.9167" stop-color="#ffc2c0"/><stop offset="1.0000" stop-color="#ffb8b7"/></linearGradient><linearGradient id="c24"><stop offset="0.0000" stop-color="#aaffff"/><stop offset="0.0833" stop-color="#b8ffff"/><stop offset="0.1667" stop-color="#c5ffff"/><stop offset="0.2500" stop-color="#d3ffff"/><stop offset="0.3333" stop-color="#e2ffff"/><stop offset="0.4167" stop-color="#f1ffff"/><stop offset="0.5000" stop-color="#fffefe"/><stop offset="0.5833" stop-color="#ffeff0"/><stop offset="0.6667" stop-color="#ffe2e2"/><stop offset="0.7500" stop-color="#ffd6d6"/><stop offset="0.8333" stop-color="#ffcacb"/><stop offset="0.9167" stop-color="#ffc0c1"/><stop offset="1.0000" stop-color="#ffb6b7"/></linearGradient><linearGradient id="c25"><stop offset="0.0000" stop-color="#aafcff"/><stop offset="0.0833" stop-color="#b8fcff"/><stop offset="0.1667" stop-color="#c5fcff"/><stop offset="0.2500" stop-color="#d3fcff"/><stop offset="0.3333" stop-color="#e2fcff"/><stop offset="0.4167" stop-color="#f1fcff"/><stop offset="0.5000" stop-color="#fffbfe"/><stop offset="0.5833" stop-color="#ffedf0"/><stop offset="0.6667" stop-color="#ffe0e3"/><stop offset="0.7500" stop-color="#ffd4d6"/><stop offset="0.8333" stop-color="#ffc9cb"/><stop offset="0.9167" stop-color="#ffbec1"/><stop offset="1.0000" stop-color="#ffb5b7"/></linearGradient><linearGradient id="c26"><stop offset="0.0000" stop-color="#abfaff"/><stop offset="0.0833" stop-color="#b8faff"/><stop offset="0.1667" stop-color="#c6faff"/><stop offset="0.2500" stop-color="#d3faff"/><stop offset="0.3333" stop-color="#e2faff"/><stop offset="0.4167" stop-color="#f0faff"/><stop offset="0.5000" stop-color="#fff9ff"/><stop offset="0.5833" stop-color="#ffebf0"/><stop offset="0.6667" stop-color="#ffdee3"/><stop offset="0.7500" stop-color="#ffd2d7"/><stop offset="0.8333" stop-color="#ffc7cb"/><stop offset="0.9167" stop-color="#ffbdc1"/><stop offset="1.0000" stop-color="#ffb3b8"/></linearGradient><linearGradient id="c27"><stop offset="0.0000" stop-color="#abf8ff"/><stop offset="0.0833" stop-color="#b8f8ff"/><stop offset="0.1667" stop-color="#c6f8ff"/><stop offset="0.2500" stop-color="#d3f8ff"/><stop offset="0.3333" stop-color="#e2f7ff"/><stop offset="0.4167" stop-color="#f0f7ff"/><stop offset="0.5000" stop-color="#fff7ff"/><stop offset="0.5833" stop-color="#ffe9f0"/><stop offset="0.6667" stop-color="#ffdce3"/><stop offset="0.7500" stop-color="#ffd0d7"/><stop offset="0.8333" stop-color="#ffc5cc"/><stop offset="0.9167" stop-color="#ffbbc1"/><stop offset="1.0000" stop-color="#ffb2b8"/></linearGradient><linearGradient id="c28"><stop offset="0.0000" stop-color="#abf6ff"/><stop offset="0.0833" stop-color="#b8f5ff"/><stop offset="0.1667" stop-color="#c6f5ff"/><stop offset="0.2500" stop-color="#d3f5ff"/><stop offset="0.3333" stop-color="#e2f5ff"/><stop offset="0.4167" stop-color="#f0f5ff"/><stop offset="0.5000" stop-color="#fff5ff"/><stop offset="0.5833" stop-color="#ffe7f0"/><stop offset="0.6667" stop-color="#ffdae3"/><stop offset="0.7500" stop-color="#ffced7"/><stop offset="0.8333" stop-color="#ffc3cc"/><stop offset="0.9167" stop-color="#ffb9c2"/><stop offset="1.0000" stop-color="#ffb0b8"/></linearGradient><linearGradient id="c29"><stop offset="0.0000" stop-color="#abf3ff"/><stop offset="0.0833" stop-color="#b8f3ff"/><stop offset="0.1667" stop-color="#c6f3ff"/><stop offset="0.2500" stop-color="#d3f3ff"/><stop offset="0.3333" stop-color="#e2f3ff"/><stop offset="0.4167" stop-color="#f0f3ff"/><stop offset="0.5000" stop-color="#fff2ff"/><stop offset="0.5833" stop-color="#ffe5f1"/><stop offset="0.6667" stop-color="#ffd8e4"/><stop offset="0.7500" stop-color="#ffccd7"/><stop offset="0.8333" stop-color="#ffc2cc"/><stop offset="0.9167" stop-color="#ffb8c2"/><stop offset="1.0000" stop-color="#ffaeb8"/></linearGradient><linearGradient id="c30"><stop offset="0.0000" stop-color="#abf1ff"/><stop offset="0.0833" stop-color="#b8f1ff"/><stop offset="0.1667" stop-color="#c6f1ff"/><stop offset="0.2500" stop-color="#d3f1ff"/><stop offset="0.3333" stop-color="#e2f0ff"/><stop offset="0.4167" stop-color="#f0f0ff"/><stop offset="0.5000" stop-color="#fff0ff"/><stop offset="0.5833" stop-color="#ffe2f1"/><stop offset="0.6667" stop-color="#ffd6e4"/><stop offset="0.7500" stop-color="#ffcad8"/><stop offset="0.8333" stop-color="#ffc0cd"/><stop offset="0.9167" stop-color="#ffb6c2"/><stop offset="1.0000" stop-color="#ffadb9"/></linearGradient><linearGradient id="c31"><stop offset="0.0000" stop-color="#abefff"/><stop offset="0.0833" stop-color="#b8efff"/><stop offset="0.1667" stop-color="#c6efff"/><stop offset="0.2500" stop-color="#d3eeff"/><stop offset="0.3333" stop-color="#e1eeff"/><stop offset="0.4167" stop-color="#f0eeff"/><stop offset="0.5000" stop-color="#ffeeff"/><stop offset="0.5833" stop-color="#ffe0f1"/><stop offset="0.6667" stop-color="#ffd4e4"/><stop offset="0.7500" stop-color="#ffc9d8"/><stop offset="0.8333" stop-color="#ffbecd"/><stop offset="0.9167" stop-color="#ffb4c3"/><stop offset="1.0000" stop-color="#ffabb9"/></linearGradient><linearGradient id="c32"><stop offset="0.0000" stop-color="#abedff"/><stop offset="0.0833" stop-color="#b8edff"/><stop offset="0.1667" stop-color="#c6ecff"/><stop offset="0.2500" stop-color="#d3ecff"/><stop offset="0.3333" stop-color="#e1ecff"/><stop offset="0.4167" stop-color="#f0ecff"/><stop offset="0.5000" stop-color="#feebff"/><stop offset="0.5833" stop-color="#ffdef1"/><stop offset="0.6667" stop-color="#ffd2e4"/><stop offset="0.7500" stop-color="#ffc7d8"/><stop offset="0.8333" stop-color="#ffbccd"/><stop offset="0.9167" stop-color="#ffb3c3"/><stop offset="1.0000" stop-color="#ffaab9"/></linearGradient><linearGradient id="c33"><stop offset="0.0000" stop-color="#acebff"/><stop offset="0.0833" stop-color="#b9eaff"/><stop offset="0.1667" stop-color="#c6eaff"/><stop offset="0.2500" stop-color="#d3eaff"/><stop offset="0.3333" stop-color="#e1eaff"/><stop offset="0.4167" stop-color="#f0e9ff"/><stop offset="0.5000" stop-color="#fee9ff"/><stop offset="0.5833" stop-color="#ffdcf2"/><stop offset="0.6667" stop-color="#ffd0e4"/><stop offset="0.7500" stop-color="#ffc5d8"/><stop offset="0.8333" stop-color="#ffbbcd"/><stop offset="0.9167" stop-color="#ffb1c3"/><stop offset="1.0000" stop-color="#ffa8ba"/></linearGradient><linearGradient id="c34"><stop offset="0.0000" stop-color="#ace8ff"/><stop offset="0.0833" stop-color="#b9e8ff"/><stop offset="0.1667" stop-color="#c6e8ff"/><stop offset="0.2500" stop-color="#d3e8ff"/><stop offset="0.3333" stop-color="#e1e7ff"/><stop offset="0.4167" stop-color="#f0e7ff"/><stop offset="0.5000" stop-color="#fee7ff"/><stop offset="0.5833" stop-color="#ffdaf2"/><stop offset="0.6667" stop-color="#ffcee5"/><stop offset="0.7500" stop-color="#ffc3d9"/><stop offset="0.8333" stop-color="#ffb9ce"/><stop offset="0.9167" stop-color="#ffb0c4"/><stop offset="1.0000" stop-color="#ffa7ba"/></linearGradient><linearGradient id="c35"><stop offset="0.0000" stop-color="#ace6ff"/><stop offset="0.0833" stop-color="#b9e6ff"/><stop offset="0.1667" stop-color="#c6e6ff"/><stop offset="0.2500" stop-color="#d3e5ff"/><stop offset="0.3333" stop-color="#e1e5ff"/><stop offset="0.4167" stop-color="#efe5ff"/><stop offset="0.5000" stop-color="#fee4ff"/><stop offset="0.5833" stop-color="#ffd8f2"/><stop offset="0.6667" stop-color="#ffcce5"/><stop offset="0.7500" stop-color="#ffc1d9"/><stop offset="0.8333" stop-color="#ffb7ce"/><stop offset="0.9167" stop-color="#ffaec4"/><stop offset="1.0000" stop-color="#ffa5ba"/></linearGradient><linearGradient id="c36"><stop offset="0.0000" stop-color="#ace4ff"/><stop offset="0.0833" stop-color="#b9e4ff"/><stop offset="0.1667" stop-color="#c6e4ff"/><stop offset="0.2500" stop-color="#d3e3ff"/><stop offset="0.3333" stop-color="#e1e3ff"/><stop offset="0.4167" stop-color="#efe2ff"/><stop offset="0.5000" stop-color="#fee2ff"/><stop offset="0.5833" stop-color="#ffd6f2"/><stop offset="0.6667" stop-color="#ffcbe5"/><stop offset="0.7500" stop-color="#ffc0d9"/><stop offset="0.8333" stop-color="#ffb6ce"/><stop offset="0.9167" stop-color="#ffacc4"/><stop offset="1.0000" stop-color="#ffa4bb"/></linearGradient><linearGradient id="c37"><stop offset="0.0000" stop-color="#ace2ff"/><stop offset="0.0833" stop-color="#b9e2ff"/><stop offset="0.1667" stop-color="#c6e1ff"/><stop offset="0.2500" stop-color="#d3e1ff"/><stop offset="0.3333" stop-color="#e1e1ff"/><stop offset="0.4167" stop-color="#efe0ff"/><stop offset="0.5000" stop-color="#fee0ff"/><stop offset="0.5833" stop-color="#ffd4f2"/><stop offset="0.6667" stop-color="#ffc9e5"/><stop offset="0.7500" stop-color="#ffbeda"/><stop offset="0.8333" stop-color="#ffb4cf"/><stop offset="0.9167" stop-color="#ffabc4"/><stop offset="1.0000" stop-color="#ffa2bb"/></linearGradient><linearGradient id="c38"><stop offset="0.0000" stop-color="#ace0ff"/><stop offset="0.0833" stop-color="#b9e0ff"/><stop offset="0.1667" stop-color="#c6dfff"/><stop offset="0.2500" stop-color="#d3dfff"/><stop offset="0.3333" stop-color="#e1deff"/><stop offset="0.4167" stop-color="#efdeff"/><stop offset="0.5000" stop-color="#fddeff"/><stop offset="0.5833" stop-color="#ffd2f3"/><stop offset="0.6667" stop-color="#ffc7e6"/><stop offset="0.7500" stop-color="#ffbcda"/><stop offset="0.8333" stop-color="#ffb2cf"/><stop offset="0.9167" stop-color="#ffa9c5"/><stop offset="1.0000" stop-color="#ffa1bb"/></linearGradient><linearGradient id="c39"><stop offset="0.0000" stop-color="#acdeff"/><stop offset="0.0833" stop-color="#b9deff"/><stop offset="0.1667" stop-color="#c6ddff"/><stop offset="0.2500" stop-color="#d3ddff"/><stop offset="0.3333" stop-color="#e1dcff"/><stop offset="0.4167" stop-color="#efdcff"/><stop offset="0.5000" stop-color="#fddbff"/><stop offset="0.5833" stop-color="#ffd0f3"/><stop offset="0.6667" stop-color="#ffc5e6"/><stop offset="0.7500" stop-color="#ffbada"/><stop offset="0.8333" stop-color="#ffb1cf"/><stop offset="0.9167" stop-color="#ffa8c5"/><stop offset="1.0000" stop-color="#ff9fbc"/></linearGradient><linearGradient id="c40"><stop offset="0.0000" stop-color="#acdcff"/><stop offset="0.0833" stop-color="#b9dbff"/><stop offset="0.1667" stop-color="#c6dbff"/><stop offset="0.2500" stop-color="#d3dbff"/><stop offset="0.3333" stop-color="#e1daff"/><stop offset="0.4167" stop-color="#efdaff"/><stop offset="0.5000" stop-color="#fdd9ff"/><stop offset="0.5833" stop-color="#ffcef3"/><stop offset="0.6667" stop-color="#ffc3e6"/><stop offset="0.7500" stop-color="#ffb9da"/><stop offset="0.8333" stop-color="#ffafcf"/><stop offset="0.9167" stop-color="#ffa6c5"/><stop offset="1.0000" stop-color="#ff9ebc"/></linearGradient><linearGradient id="c41"><stop offset="0.0000" stop-color="#addaff"/><stop offset="0.0833" stop-color="#b9d9ff"/><stop offset="0.1667" stop-color="#c6d9ff"/><stop offset="0.2500" stop-color="#d3d8ff"/><stop offset="0.3333" stop-color="#e1d8ff"/><stop offset="0.4167" stop-color="#efd8ff"/><stop offset="0.5000" stop-color="#fdd7ff"/><stop offset="0.5833" stop-color="#ffcdf3"/><stop offset="0.6667" stop-color="#ffc1e6"/><stop offset="0.7500" stop-color="#ffb7db"/><stop offset="0.8333" stop-color="#ffadd0"/><stop offset="0.9167" stop-color="#ffa4c6"/><stop offset="1.0000" stop-color="#ff9cbc"/></linearGradient><linearGradient id="c42"><stop offset="0.0000" stop-color="#add8ff"/><stop offset="0.0833" stop-color="#b9d7ff"/><stop offset="0.1667" stop-color="#c6d7ff"/><stop offset="0.2500" stop-color="#d3d6ff"/><stop offset="0.3333" stop-color="#e1d6ff"/><stop offset="0.4167" stop-color="#efd5ff"/><stop offset="0.5000" stop-color="#fdd5ff"/><stop offset="0.5833" stop-color="#ffcbf3"/><stop offset="0.6667" stop-color="#ffbfe7"/><stop offset="0.7500" stop-color="#ffb5db"/><stop offset="0.8333" stop-color="#ffacd0"/><stop offset="0.9167" stop-color="#ffa3c6"/><stop offset="1.0000" stop-color="#ff9bbc"/></linearGradient><linearGradient id="c43"><stop offset="0.0000" stop-color="#add6ff"/><stop offset="0.0833" stop-color="#b9d5ff"/><stop offset="0.1667" stop-color="#c6d5ff"/><stop offset="0.2500" stop-color="#d3d4ff"/><stop offset="0.3333" stop-color="#e1d4ff"/><stop offset="0.4167" stop-color="#efd3ff"/><stop offset="0.5000" stop-color="#fdd3ff"/><stop offset="0.5833" stop-color="#ffc9f4"/><stop offset="0.6667" stop-color="#ffbee7"/><stop offset="0.7500" stop-color="#ffb4db"/><stop offset="0.8333" stop-color="#ffaad0"/><stop offset="0.9167" stop-color="#ffa1c6"/><stop offset="1.0000" stop-color="#ff99bd"/></linearGradient><linearGradient id="c44"><stop offset="0.0000" stop-color="#add4ff"/><stop offset="0.0833" stop-color="#bad3ff"/><stop offset="0.1667" stop-color="#c6d3ff"/><stop offset="0.2500" stop-color="#d3d2ff"/><stop offset="0.3333" stop-color="#e1d2ff"/><stop offset="0.4167" stop-color="#eed1ff"/><stop offset="0.5000" stop-color="#fcd1ff"/><stop offset="0.5833" stop-color="#ffc7f4"/><stop offset="0.6667" stop-color="#ffbce7"/><stop offset="0.7500" stop-color="#ffb2db"/><stop offset="0.8333" stop-color="#ffa9d0"/><stop offset="0.9167" stop-color="#ffa0c6"/><stop offset="1.0000" stop-color="#ff98bd"/></linearGradient><linearGradient id="c45"><stop offset="0.0000" stop-color="#add2ff"/><stop offset="0.0833" stop-color="#bad1ff"/><stop offset="0.1667" stop-color="#c6d1ff"/><stop offset="0.2500" stop-color="#d3d0ff"/><stop offset="0.3333" stop-color="#e1d0ff"/><stop offset="0.4167" stop-color="#eecfff"/><stop offset="0.5000" stop-color="#fcceff"/><stop offset="0.5833" stop-color="#ffc5f4"/><stop offset="0.6667" stop-color="#ffbae7"/><stop offset="0.7500" stop-color="#ffb0db"/><stop offset="0.8333" stop-color="#ffa7d1"/><stop offset="0.9167" stop-color="#ff9ec7"/><stop offset="1.0000" stop-color="#ff96bd"/></linearGradient><linearGradient id="c46"><stop offset="0.0000" stop-color="#add0ff"/><stop offset="0.0833" stop-color="#bacfff"/><stop offset="0.1667" stop-color="#c6cfff"/><stop offset="0.2500" stop-color="#d3ceff"/><stop offset="0.3333" stop-color="#e1ceff"/><stop offset="0.4167" stop-color="#eecdff"/><stop offset="0.5000" stop-color="#fcccff"/><stop offset="0.5833" stop-color="#ffc3f4"/><stop offset="0.6667" stop-color="#ffb8e7"/><stop offset="0.7500" stop-color="#ffaedc"/><stop offset="0.8333" stop-color="#ffa5d1"/><stop offset="0.9167" stop-color="#ff9dc7"/><stop offset="1.0000" stop-color="#ff95be"/></linearGradient><linearGradient id="c47"><stop offset="0.0000" stop-color="#adceff"/><stop offset="0.0833" stop-color="#bacdff"/><stop offset="0.1667" stop-color="#c6cdff"/><stop offset="0.2500" stop-color="#d3ccff"/><stop offset="0.3333" stop-color="#e1ccff"/><stop offset="0.4167" stop-color="#eecbff"/><stop offset="0.5000" stop-color="#fccaff"/><stop offset="0.5833" stop-color="#ffc1f4"/><stop offset="0.6667" stop-color="#ffb7e8"/><stop offset="0.7500" stop-color="#ffaddc"/><stop offset="0.8333" stop-color="#ffa4d1"/><stop offset="0.9167" stop-color="#ff9bc7"/><stop offset="1.0000" stop-color="#ff94be"/></linearGradient><linearGradient id="c48"><stop offset="0.0000" stop-color="#aeccff"/><stop offset="0.0833" stop-color="#bacbff"/><stop offset="0.1667" stop-color="#c6cbff"/><stop offset="0.2500" stop-color="#d3caff"/><stop offset="0.3333" stop-color="#e1c9ff"/><stop offset="0.4167" stop-color="#eec9ff"/><stop offset="0.5000" stop-color="#fcc8ff"/><stop offset="0.5833" stop-color="#ffbff4"/><stop offset="0.6667" stop-color="#ffb5e8"/><stop offset="0.7500" stop-color="#ffabdc"/><stop offset="0.8333" stop-color="#ffa2d1"/><stop offset="0.9167" stop-color="#ff9ac7"/><stop offset="1.0000" stop-color="#ff92be"/></linearGradient><clipPath id="cclip"><rect x="417.4" y="839.0" width="268.0" height="194.0"/></clipPath><linearGradient id="gpc3" x1="0" y1="0" x2="0" y2="1"><stop offset="0" stop-color="#6e6e6e"/><stop offset="1" stop-color="#a6a6a6"/></linearGradient></defs>
<g transform="translate(10.1,12.1) rotate(45)"><rect x="-6.6" y="-6.6" width="6.6" height="6.6" rx="1.5" fill="#f0cc00"/><rect x="-4.5" y="-4.5" width="2.4" height="2.4" rx="0.4" fill="#ffe45a"/><rect x="0" y="-6.6" width="6.6" height="6.6" rx="1.5" fill="#10c010"/><rect x="2.1" y="-4.5" width="2.4" height="2.4" rx="0.4" fill="#52e852"/><rect x="-6.6" y="0" width="6.6" height="6.6" rx="1.5" fill="#189cec"/><rect x="-4.5" y="2.1" width="2.4" height="2.4" rx="0.4" fill="#62c8ff"/><rect x="0" y="0" width="6.6" height="6.6" rx="1.5" fill="#ea1a56"/><rect x="2.1" y="2.1" width="2.4" height="2.4" rx="0.4" fill="#ff6a92"/><path d="M-7 0 H7 M0 -7 V7" stroke="#0f4568" stroke-width="0.7"/></g>
<line x1="1746.00" y1="11.50" x2="1756.00" y2="11.50" stroke="#ffffff" stroke-width="1.00" />
<rect x="1794.7" y="9.2" width="7.6" height="7.6" rx="1.6" fill="none" stroke="#fff" stroke-width="1"/>
<path d="M1796.9 9.2 V8.4 a1.6 1.6 0 0 1 1.6 -1.6 h4.4 a1.6 1.6 0 0 1 1.6 1.6 v4.6 a1.6 1.6 0 0 1 -1.6 1.6 h-0.6" fill="none" stroke="#fff" stroke-width="1"/>
<path d="M1843.5 7 L1853.5 17 M1853.5 7 L1843.5 17" stroke="#fff" stroke-width="1.1" fill="none"/>
<g transform="translate(35.7,39) rotate(45) scale(1.07)"><rect x="-7.6" y="-7.6" width="15.2" height="15.2" rx="2.2" fill="none" stroke="#fff" stroke-width="2.2"/><rect x="-4.9" y="-4.9" width="4.2" height="4.2" rx="0.8" fill="#fff"/><rect x="0.7" y="-4.9" width="4.2" height="4.2" rx="0.8" fill="#fff"/><rect x="-4.9" y="0.7" width="4.2" height="4.2" rx="0.8" fill="#fff"/><rect x="0.7" y="0.7" width="4.2" height="4.2" rx="0.8" fill="#fff"/><path d="M-10 0 H10 M0 -10 V10" stroke="#d82424" stroke-width="1.1"/></g>
<circle cx="172" cy="39" r="10" fill="url(#gdd)"/>
<path d="M167.3 36.8 H176.9 L172.1 42.6 Z" fill="#fff"/>
<circle cx="13" cy="75" r="10" fill="url(#gpc)"/><path d="M10.6 69.6 L16.4 74.8 L10.6 80 Z" fill="#fff"/>
<circle cx="107.2" cy="77.6" r="10" fill="url(#gpl)"/>
<circle cx="1373.7" cy="76.4" r="10" fill="url(#gpc2)"/><path d="M1369.0 74 h9.4 l-4.7 5.4 Z" fill="#fff"/>
<circle cx="1415" cy="76.2" r="13" fill="#0000ff" stroke="#fff" stroke-width="1"/>
<circle cx="1636.0" cy="76.4" r="10" fill="url(#gpc2)"/><path d="M1631.3 74 h9.4 l-4.7 5.4 Z" fill="#fff"/>
<circle cx="1791.3" cy="76.4" r="10" fill="url(#gpc2)"/><path d="M1786.6 74 h9.4 l-4.7 5.4 Z" fill="#fff"/>
<circle cx="1829.3" cy="75.3" r="10" fill="url(#gpc)"/>
<line x1="1833.50" y1="75.30" x2="1836.30" y2="75.30" stroke="#e8e8e8" stroke-width="2.2"/><line x1="1832.27" y1="78.27" x2="1834.25" y2="80.25" stroke="#e8e8e8" stroke-width="2.2"/><line x1="1829.30" y1="79.50" x2="1829.30" y2="82.30" stroke="#e8e8e8" stroke-width="2.2"/><line x1="1826.33" y1="78.27" x2="1824.35" y2="80.25" stroke="#e8e8e8" stroke-width="2.2"/><line x1="1825.10" y1="75.30" x2="1822.30" y2="75.30" stroke="#e8e8e8" stroke-width="2.2"/><line x1="1826.33" y1="72.33" x2="1824.35" y2="70.35" stroke="#e8e8e8" stroke-width="2.2"/><line x1="1829.30" y1="71.10" x2="1829.30" y2="68.30" stroke="#e8e8e8" stroke-width="2.2"/><line x1="1832.27" y1="72.33" x2="1834.25" y2="70.35" stroke="#e8e8e8" stroke-width="2.2"/><circle cx="1829.3" cy="75.3" r="4.2" fill="none" stroke="#e8e8e8" stroke-width="1.8"/>
<circle cx="1861.5" cy="75.3" r="10" fill="url(#gpc)"/><path d="M1864 70 L1858 75.3 L1864 80.6 Z" fill="#fff"/>
<rect x="51.00" y="282.50" width="348.00" height="281.00" fill="#242424" />
<line x1="98.80" y1="282.50" x2="98.80" y2="563.50" stroke="#181818" stroke-width="1.00" />
<line x1="97.40" y1="282.50" x2="97.40" y2="563.50" stroke="#868686" stroke-width="1.60" />
<line x1="97.40" y1="563.50" x2="97.40" y2="570.00" stroke="#dcdcdc" stroke-width="2.00" />
<line x1="145.10" y1="282.50" x2="145.10" y2="563.50" stroke="#181818" stroke-width="1.00" />
<line x1="143.70" y1="282.50" x2="143.70" y2="563.50" stroke="#868686" stroke-width="1.60" />
<line x1="143.70" y1="563.50" x2="143.70" y2="570.00" stroke="#dcdcdc" stroke-width="2.00" />
<line x1="191.40" y1="282.50" x2="191.40" y2="563.50" stroke="#181818" stroke-width="1.00" />
<line x1="190.00" y1="282.50" x2="190.00" y2="563.50" stroke="#868686" stroke-width="1.60" />
<line x1="190.00" y1="563.50" x2="190.00" y2="570.00" stroke="#dcdcdc" stroke-width="2.00" />
<line x1="237.70" y1="282.50" x2="237.70" y2="563.50" stroke="#181818" stroke-width="1.00" />
<line x1="236.30" y1="282.50" x2="236.30" y2="563.50" stroke="#868686" stroke-width="1.60" />
<line x1="236.30" y1="563.50" x2="236.30" y2="570.00" stroke="#dcdcdc" stroke-width="2.00" />
<line x1="284.00" y1="282.50" x2="284.00" y2="563.50" stroke="#181818" stroke-width="1.00" />
<line x1="282.60" y1="282.50" x2="282.60" y2="563.50" stroke="#868686" stroke-width="1.60" />
<line x1="282.60" y1="563.50" x2="282.60" y2="570.00" stroke="#dcdcdc" stroke-width="2.00" />
<line x1="330.30" y1="282.50" x2="330.30" y2="563.50" stroke="#181818" stroke-width="1.00" />
<line x1="328.90" y1="282.50" x2="328.90" y2="563.50" stroke="#868686" stroke-width="1.60" />
<line x1="328.90" y1="563.50" x2="328.90" y2="570.00" stroke="#dcdcdc" stroke-width="2.00" />
<line x1="376.60" y1="282.50" x2="376.60" y2="563.50" stroke="#181818" stroke-width="1.00" />
<line x1="375.20" y1="282.50" x2="375.20" y2="563.50" stroke="#868686" stroke-width="1.60" />
<line x1="375.20" y1="563.50" x2="375.20" y2="570.00" stroke="#dcdcdc" stroke-width="2.00" />
<line x1="51.50" y1="563.50" x2="51.50" y2="570.00" stroke="#dcdcdc" stroke-width="2.00" />
<line x1="44.50" y1="282.50" x2="51.00" y2="282.50" stroke="#dcdcdc" stroke-width="1.60" />
<line x1="44.50" y1="308.50" x2="51.00" y2="308.50" stroke="#dcdcdc" stroke-width="1.60" />
<line x1="44.50" y1="334.75" x2="51.00" y2="334.75" stroke="#dcdcdc" stroke-width="1.60" />
<line x1="44.50" y1="359.00" x2="51.00" y2="359.00" stroke="#dcdcdc" stroke-width="1.60" />
<line x1="44.50" y1="384.75" x2="51.00" y2="384.75" stroke="#dcdcdc" stroke-width="1.60" />
<line x1="44.50" y1="411.25" x2="51.00" y2="411.25" stroke="#dcdcdc" stroke-width="1.60" />
<line x1="44.50" y1="436.90" x2="51.00" y2="436.90" stroke="#dcdcdc" stroke-width="1.60" />
<line x1="44.50" y1="461.00" x2="51.00" y2="461.00" stroke="#dcdcdc" stroke-width="1.60" />
<line x1="44.50" y1="487.90" x2="51.00" y2="487.90" stroke="#dcdcdc" stroke-width="1.60" />
<line x1="44.50" y1="513.50" x2="51.00" y2="513.50" stroke="#dcdcdc" stroke-width="1.60" />
<line x1="44.50" y1="537.50" x2="51.00" y2="537.50" stroke="#dcdcdc" stroke-width="1.60" />
<line x1="44.50" y1="563.40" x2="51.00" y2="563.40" stroke="#dcdcdc" stroke-width="1.60" />
<rect x="52.00" y="514.65" width="72.94" height="19.50" fill="#000" />
<rect x="52.00" y="516.25" width="71.34" height="16.30" fill="url(#bg10)" />
<rect x="52.00" y="516.25" width="71.34" height="16.30" fill="url(#bevel)" opacity="0.10"/>
<rect x="52.00" y="488.40" width="79.66" height="19.50" fill="#000" />
<rect x="52.00" y="490.00" width="78.06" height="16.30" fill="url(#bg20)" />
<rect x="52.00" y="490.00" width="78.06" height="16.30" fill="url(#bevel)" opacity="0.13"/>
<rect x="52.00" y="464.00" width="77.11" height="19.50" fill="#000" />
<rect x="52.00" y="465.60" width="75.51" height="16.30" fill="url(#bg30)" />
<rect x="52.00" y="465.60" width="75.51" height="16.30" fill="url(#bevel)" opacity="0.18"/>
<rect x="52.00" y="438.40" width="75.72" height="19.50" fill="#000" />
<rect x="52.00" y="440.00" width="74.12" height="16.30" fill="url(#bg40)" />
<rect x="52.00" y="440.00" width="74.12" height="16.30" fill="url(#bevel)" opacity="0.23"/>
<rect x="52.00" y="411.50" width="68.31" height="19.50" fill="#000" />
<rect x="52.00" y="413.10" width="66.71" height="16.30" fill="url(#bg50)" />
<rect x="52.00" y="413.10" width="66.71" height="16.30" fill="url(#bevel)" opacity="0.29"/>
<rect x="52.00" y="385.90" width="48.17" height="19.50" fill="#000" />
<rect x="52.00" y="387.50" width="46.57" height="16.30" fill="url(#bg60)" />
<rect x="52.00" y="387.50" width="46.57" height="16.30" fill="url(#bevel)" opacity="0.36"/>
<rect x="52.00" y="361.50" width="37.29" height="19.50" fill="#000" />
<rect x="52.00" y="363.10" width="35.69" height="16.30" fill="url(#bg70)" />
<rect x="52.00" y="363.10" width="35.69" height="16.30" fill="url(#bevel)" opacity="0.43"/>
<rect x="52.00" y="335.30" width="44.01" height="19.50" fill="#000" />
<rect x="52.00" y="336.90" width="42.41" height="16.30" fill="url(#bg80)" />
<rect x="52.00" y="336.90" width="42.41" height="16.30" fill="url(#bevel)" opacity="0.51"/>
<rect x="52.00" y="309.65" width="34.75" height="19.50" fill="#000" />
<rect x="52.00" y="311.25" width="33.15" height="16.30" fill="url(#bg90)" />
<rect x="52.00" y="311.25" width="33.15" height="16.30" fill="url(#bevel)" opacity="0.59"/>
<rect x="52.00" y="285.30" width="19.47" height="19.50" fill="#000" />
<rect x="52.00" y="286.90" width="17.87" height="16.30" fill="url(#bg100)" />
<rect x="52.00" y="286.90" width="17.87" height="16.30" fill="url(#bevel)" opacity="0.68"/>
<line x1="51.00" y1="282.50" x2="399.00" y2="282.50" stroke="#929292" stroke-width="1.60" />
<line x1="399.00" y1="281.70" x2="399.00" y2="563.50" stroke="#8c8c8c" stroke-width="2.00" />
<line x1="51.50" y1="282.50" x2="51.50" y2="563.50" stroke="#9c9c9c" stroke-width="1.60" />
<line x1="50.70" y1="563.50" x2="400.00" y2="563.50" stroke="#9c9c9c" stroke-width="1.60" />
<rect x="477.70" y="206.80" width="640.00" height="356.70" fill="#242424" />
<line x1="471.20" y1="208.00" x2="477.70" y2="208.00" stroke="#dcdcdc" stroke-width="1.60" />
<line x1="477.70" y1="253.85" x2="1117.70" y2="253.85" stroke="#181818" stroke-width="1.00" />
<line x1="477.70" y1="252.55" x2="1117.70" y2="252.55" stroke="#868686" stroke-width="2.00" />
<line x1="471.20" y1="252.55" x2="477.70" y2="252.55" stroke="#dcdcdc" stroke-width="1.60" />
<line x1="477.70" y1="298.40" x2="1117.70" y2="298.40" stroke="#181818" stroke-width="1.00" />
<line x1="477.70" y1="297.10" x2="1117.70" y2="297.10" stroke="#868686" stroke-width="2.00" />
<line x1="471.20" y1="297.10" x2="477.70" y2="297.10" stroke="#dcdcdc" stroke-width="1.60" />
<line x1="477.70" y1="342.95" x2="1117.70" y2="342.95" stroke="#181818" stroke-width="1.00" />
<line x1="477.70" y1="341.65" x2="1117.70" y2="341.65" stroke="#868686" stroke-width="2.00" />
<line x1="471.20" y1="341.65" x2="477.70" y2="341.65" stroke="#dcdcdc" stroke-width="1.60" />
<line x1="477.70" y1="387.50" x2="1117.70" y2="387.50" stroke="#181818" stroke-width="1.00" />
<line x1="477.70" y1="386.20" x2="1117.70" y2="386.20" stroke="#868686" stroke-width="2.00" />
<line x1="471.20" y1="386.20" x2="477.70" y2="386.20" stroke="#dcdcdc" stroke-width="1.60" />
<line x1="477.70" y1="432.05" x2="1117.70" y2="432.05" stroke="#181818" stroke-width="1.00" />
<line x1="477.70" y1="430.75" x2="1117.70" y2="430.75" stroke="#868686" stroke-width="2.00" />
<line x1="471.20" y1="430.75" x2="477.70" y2="430.75" stroke="#dcdcdc" stroke-width="1.60" />
<line x1="477.70" y1="476.60" x2="1117.70" y2="476.60" stroke="#181818" stroke-width="1.00" />
<line x1="477.70" y1="475.30" x2="1117.70" y2="475.30" stroke="#868686" stroke-width="2.00" />
<line x1="471.20" y1="475.30" x2="477.70" y2="475.30" stroke="#dcdcdc" stroke-width="1.60" />
<line x1="477.70" y1="521.15" x2="1117.70" y2="521.15" stroke="#181818" stroke-width="1.00" />
<line x1="477.70" y1="519.85" x2="1117.70" y2="519.85" stroke="#868686" stroke-width="2.00" />
<line x1="471.20" y1="519.85" x2="477.70" y2="519.85" stroke="#dcdcdc" stroke-width="1.60" />
<line x1="471.20" y1="563.50" x2="477.70" y2="563.50" stroke="#dcdcdc" stroke-width="1.60" />
<line x1="478.00" y1="563.50" x2="478.00" y2="569.70" stroke="#dcdcdc" stroke-width="2.00" />
<line x1="540.00" y1="563.50" x2="540.00" y2="569.70" stroke="#dcdcdc" stroke-width="2.00" />
<line x1="604.20" y1="563.50" x2="604.20" y2="569.70" stroke="#dcdcdc" stroke-width="2.00" />
<line x1="668.40" y1="563.50" x2="668.40" y2="569.70" stroke="#dcdcdc" stroke-width="2.00" />
<line x1="732.60" y1="563.50" x2="732.60" y2="569.70" stroke="#dcdcdc" stroke-width="2.00" />
<line x1="796.80" y1="563.50" x2="796.80" y2="569.70" stroke="#dcdcdc" stroke-width="2.00" />
<line x1="861.00" y1="563.50" x2="861.00" y2="569.70" stroke="#dcdcdc" stroke-width="2.00" />
<line x1="925.20" y1="563.50" x2="925.20" y2="569.70" stroke="#dcdcdc" stroke-width="2.00" />
<line x1="989.40" y1="563.50" x2="989.40" y2="569.70" stroke="#dcdcdc" stroke-width="2.00" />
<line x1="1053.60" y1="563.50" x2="1053.60" y2="569.70" stroke="#dcdcdc" stroke-width="2.00" />
<line x1="1117.80" y1="563.50" x2="1117.80" y2="569.70" stroke="#dcdcdc" stroke-width="2.00" />
<polyline clip-path="url(#rclip)" points="475.8,386.2 540.0,432.5 604.2,429.9 668.4,424.5 732.6,416.5 796.8,408.5 861.0,404.0 925.2,398.7 989.4,395.1 1053.6,390.7 1117.8,384.0" fill="none" stroke="#008000" stroke-width="3.2" stroke-linejoin="round"/>
<polyline clip-path="url(#rclip)" points="475.8,386.2 540.0,430.3 604.2,428.1 668.4,423.6 732.6,412.9 796.8,404.0 861.0,400.5 925.2,395.1 989.4,389.8 1053.6,386.2 1117.8,382.2" fill="none" stroke="#ff0000" stroke-width="3.0" stroke-linejoin="round"/>
<polyline clip-path="url(#rclip)" points="475.8,386.2 540.0,432.1 604.2,427.2 668.4,422.7 732.6,411.1 796.8,401.3 861.0,398.7 925.2,392.4 989.4,387.1 1053.6,382.6 1117.8,378.6" fill="none" stroke="#0000ff" stroke-width="3.4" stroke-linejoin="round"/>
<rect x="477.00" y="204.80" width="641.70" height="4.40" fill="#8c8c8c" />
<line x1="1117.70" y1="205.30" x2="1117.70" y2="563.50" stroke="#8c8c8c" stroke-width="2.00" />
<line x1="478.00" y1="205.30" x2="478.00" y2="563.50" stroke="#9c9c9c" stroke-width="1.80" />
<line x1="477.20" y1="563.50" x2="1118.70" y2="563.50" stroke="#9c9c9c" stroke-width="1.80" />
<rect x="1191.70" y="206.00" width="645.30" height="357.30" fill="#242424" />
<line x1="1191.70" y1="249.10" x2="1837.00" y2="249.10" stroke="#181818" stroke-width="1.00" />
<line x1="1191.70" y1="247.80" x2="1837.00" y2="247.80" stroke="#868686" stroke-width="2.00" />
<line x1="1185.20" y1="247.80" x2="1191.70" y2="247.80" stroke="#dcdcdc" stroke-width="1.60" />
<line x1="1191.70" y1="293.54" x2="1837.00" y2="293.54" stroke="#181818" stroke-width="1.00" />
<line x1="1191.70" y1="292.24" x2="1837.00" y2="292.24" stroke="#868686" stroke-width="2.00" />
<line x1="1185.20" y1="292.24" x2="1191.70" y2="292.24" stroke="#dcdcdc" stroke-width="1.60" />
<line x1="1191.70" y1="337.98" x2="1837.00" y2="337.98" stroke="#181818" stroke-width="1.00" />
<line x1="1191.70" y1="336.68" x2="1837.00" y2="336.68" stroke="#868686" stroke-width="2.00" />
<line x1="1185.20" y1="336.68" x2="1191.70" y2="336.68" stroke="#dcdcdc" stroke-width="1.60" />
<line x1="1191.70" y1="382.42" x2="1837.00" y2="382.42" stroke="#181818" stroke-width="1.00" />
<line x1="1191.70" y1="381.12" x2="1837.00" y2="381.12" stroke="#868686" stroke-width="2.00" />
<line x1="1185.20" y1="381.12" x2="1191.70" y2="381.12" stroke="#dcdcdc" stroke-width="1.60" />
<line x1="1191.70" y1="426.86" x2="1837.00" y2="426.86" stroke="#181818" stroke-width="1.00" />
<line x1="1191.70" y1="425.56" x2="1837.00" y2="425.56" stroke="#868686" stroke-width="2.00" />
<line x1="1185.20" y1="425.56" x2="1191.70" y2="425.56" stroke="#dcdcdc" stroke-width="1.60" />
<line x1="1191.70" y1="471.30" x2="1837.00" y2="471.30" stroke="#181818" stroke-width="1.00" />
<line x1="1191.70" y1="470.00" x2="1837.00" y2="470.00" stroke="#868686" stroke-width="2.00" />
<line x1="1185.20" y1="470.00" x2="1191.70" y2="470.00" stroke="#dcdcdc" stroke-width="1.60" />
<line x1="1191.70" y1="515.74" x2="1837.00" y2="515.74" stroke="#181818" stroke-width="1.00" />
<line x1="1191.70" y1="514.44" x2="1837.00" y2="514.44" stroke="#868686" stroke-width="2.00" />
<line x1="1185.20" y1="514.44" x2="1191.70" y2="514.44" stroke="#dcdcdc" stroke-width="1.60" />
<line x1="1191.70" y1="560.18" x2="1837.00" y2="560.18" stroke="#181818" stroke-width="1.00" />
<line x1="1191.70" y1="558.88" x2="1837.00" y2="558.88" stroke="#868686" stroke-width="2.00" />
<line x1="1185.20" y1="558.88" x2="1191.70" y2="558.88" stroke="#dcdcdc" stroke-width="1.60" />
<line x1="1192.10" y1="563.30" x2="1192.10" y2="569.50" stroke="#dcdcdc" stroke-width="2.00" />
<line x1="1256.51" y1="563.30" x2="1256.51" y2="569.50" stroke="#dcdcdc" stroke-width="2.00" />
<line x1="1320.92" y1="563.30" x2="1320.92" y2="569.50" stroke="#dcdcdc" stroke-width="2.00" />
<line x1="1385.33" y1="563.30" x2="1385.33" y2="569.50" stroke="#dcdcdc" stroke-width="2.00" />
<line x1="1449.74" y1="563.30" x2="1449.74" y2="569.50" stroke="#dcdcdc" stroke-width="2.00" />
<line x1="1514.15" y1="563.30" x2="1514.15" y2="569.50" stroke="#dcdcdc" stroke-width="2.00" />
<line x1="1578.56" y1="563.30" x2="1578.56" y2="569.50" stroke="#dcdcdc" stroke-width="2.00" />
<line x1="1642.97" y1="563.30" x2="1642.97" y2="569.50" stroke="#dcdcdc" stroke-width="2.00" />
<line x1="1707.38" y1="563.30" x2="1707.38" y2="569.50" stroke="#dcdcdc" stroke-width="2.00" />
<line x1="1771.79" y1="563.30" x2="1771.79" y2="569.50" stroke="#dcdcdc" stroke-width="2.00" />
<line x1="1836.20" y1="563.30" x2="1836.20" y2="569.50" stroke="#dcdcdc" stroke-width="2.00" />
<polyline points="1192.1,495.1 1256.5,249.8 1320.9,247.8 1385.3,242.9 1449.7,246.2 1514.2,247.1 1578.6,246.2 1643.0,246.7 1707.4,245.6 1771.8,240.2 1836.2,272.2" fill="none" stroke="#8e8e8e" stroke-width="3" stroke-linejoin="miter"/>
<polyline points="1190.8,494.8 1194.5,455.0 1197.5,428.3 1202.7,410.8 1209.7,391.0 1216.7,375.8 1226.0,360.6 1236.5,349.0 1247.0,340.8 1256.3,334.3 1268.0,326.8 1282.0,319.8 1303.0,312.1 1326.3,305.1 1347.3,300.7 1368.3,297.0 1384.6,294.6 1403.3,292.5 1426.6,290.2 1449.9,288.3 1470.0,286.7 1513.2,283.4 1577.7,279.9 1642.2,277.4 1706.8,275.6 1771.3,273.9 1836.0,272.6" fill="none" stroke="#ffff00" stroke-width="3.2" stroke-linejoin="round"/>
<line x1="1191.70" y1="206.00" x2="1837.00" y2="206.00" stroke="#909090" stroke-width="2.00" />
<line x1="1837.00" y1="205.00" x2="1837.00" y2="563.30" stroke="#8c8c8c" stroke-width="2.00" />
<line x1="1192.00" y1="205.00" x2="1192.00" y2="563.30" stroke="#9c9c9c" stroke-width="1.80" />
<line x1="1191.20" y1="563.30" x2="1838.00" y2="563.30" stroke="#9c9c9c" stroke-width="1.80" />
<rect x="417.40" y="839.00" width="268.00" height="4.00" fill="url(#c0)" shape-rendering="crispEdges"/>
<rect x="417.40" y="843.00" width="268.00" height="4.00" fill="url(#c1)" shape-rendering="crispEdges"/>
<rect x="417.40" y="847.00" width="268.00" height="4.00" fill="url(#c2)" shape-rendering="crispEdges"/>
<rect x="417.40" y="851.00" width="268.00" height="4.00" fill="url(#c3)" shape-rendering="crispEdges"/>
<rect x="417.40" y="855.00" width="268.00" height="4.00" fill="url(#c4)" shape-rendering="crispEdges"/>
<rect x="417.40" y="859.00" width="268.00" height="4.00" fill="url(#c5)" shape-rendering="crispEdges"/>
<rect x="417.40" y="863.00" width="268.00" height="4.00" fill="url(#c6)" shape-rendering="crispEdges"/>
<rect x="417.40" y="867.00" width="268.00" height="4.00" fill="url(#c7)" shape-rendering="crispEdges"/>
<rect x="417.40" y="871.00" width="268.00" height="4.00" fill="url(#c8)" shape-rendering="crispEdges"/>
<rect x="417.40" y="875.00" width="268.00" height="4.00" fill="url(#c9)" shape-rendering="crispEdges"/>
<rect x="417.40" y="879.00" width="268.00" height="4.00" fill="url(#c10)" shape-rendering="crispEdges"/>
<rect x="417.40" y="883.00" width="268.00" height="4.00" fill="url(#c11)" shape-rendering="crispEdges"/>
<rect x="417.40" y="887.00" width="268.00" height="4.00" fill="url(#c12)" shape-rendering="crispEdges"/>
<rect x="417.40" y="891.00" width="268.00" height="4.00" fill="url(#c13)" shape-rendering="crispEdges"/>
<rect x="417.40" y="895.00" width="268.00" height="4.00" fill="url(#c14)" shape-rendering="crispEdges"/>
<rect x="417.40" y="899.00" width="268.00" height="4.00" fill="url(#c15)" shape-rendering="crispEdges"/>
<rect x="417.40" y="903.00" width="268.00" height="4.00" fill="url(#c16)" shape-rendering="crispEdges"/>
<rect x="417.40" y="907.00" width="268.00" height="4.00" fill="url(#c17)" shape-rendering="crispEdges"/>
<rect x="417.40" y="911.00" width="268.00" height="4.00" fill="url(#c18)" shape-rendering="crispEdges"/>
<rect x="417.40" y="915.00" width="268.00" height="4.00" fill="url(#c19)" shape-rendering="crispEdges"/>
<rect x="417.40" y="919.00" width="268.00" height="4.00" fill="url(#c20)" shape-rendering="crispEdges"/>
<rect x="417.40" y="923.00" width="268.00" height="4.00" fill="url(#c21)" shape-rendering="crispEdges"/>
<rect x="417.40" y="927.00" width="268.00" height="4.00" fill="url(#c22)" shape-rendering="crispEdges"/>
<rect x="417.40" y="931.00" width="268.00" height="4.00" fill="url(#c23)" shape-rendering="crispEdges"/>
<rect x="417.40" y="935.00" width="268.00" height="4.00" fill="url(#c24)" shape-rendering="crispEdges"/>
<rect x="417.40" y="939.00" width="268.00" height="4.00" fill="url(#c25)" shape-rendering="crispEdges"/>
<rect x="417.40" y="943.00" width="268.00" height="4.00" fill="url(#c26)" shape-rendering="crispEdges"/>
<rect x="417.40" y="947.00" width="268.00" height="4.00" fill="url(#c27)" shape-rendering="crispEdges"/>
<rect x="417.40" y="951.00" width="268.00" height="4.00" fill="url(#c28)" shape-rendering="crispEdges"/>
<rect x="417.40" y="955.00" width="268.00" height="4.00" fill="url(#c29)" shape-rendering="crispEdges"/>
<rect x="417.40" y="959.00" width="268.00" height="4.00" fill="url(#c30)" shape-rendering="crispEdges"/>
<rect x="417.40" y="963.00" width="268.00" height="4.00" fill="url(#c31)" shape-rendering="crispEdges"/>
<rect x="417.40" y="967.00" width="268.00" height="4.00" fill="url(#c32)" shape-rendering="crispEdges"/>
<rect x="417.40" y="971.00" width="268.00" height="4.00" fill="url(#c33)" shape-rendering="crispEdges"/>
<rect x="417.40" y="975.00" width="268.00" height="4.00" fill="url(#c34)" shape-rendering="crispEdges"/>
<rect x="417.40" y="979.00" width="268.00" height="4.00" fill="url(#c35)" shape-rendering="crispEdges"/>
<rect x="417.40" y="983.00" width="268.00" height="4.00" fill="url(#c36)" shape-rendering="crispEdges"/>
<rect x="417.40" y="987.00" width="268.00" height="4.00" fill="url(#c37)" shape-rendering="crispEdges"/>
<rect x="417.40" y="991.00" width="268.00" height="4.00" fill="url(#c38)" shape-rendering="crispEdges"/>
<rect x="417.40" y="995.00" width="268.00" height="4.00" fill="url(#c39)" shape-rendering="crispEdges"/>
<rect x="417.40" y="999.00" width="268.00" height="4.00" fill="url(#c40)" shape-rendering="crispEdges"/>
<rect x="417.40" y="1003.00" width="268.00" height="4.00" fill="url(#c41)" shape-rendering="crispEdges"/>
<rect x="417.40" y="1007.00" width="268.00" height="4.00" fill="url(#c42)" shape-rendering="crispEdges"/>
<rect x="417.40" y="1011.00" width="268.00" height="4.00" fill="url(#c43)" shape-rendering="crispEdges"/>
<rect x="417.40" y="1015.00" width="268.00" height="4.00" fill="url(#c44)" shape-rendering="crispEdges"/>
<rect x="417.40" y="1019.00" width="268.00" height="4.00" fill="url(#c45)" shape-rendering="crispEdges"/>
<rect x="417.40" y="1023.00" width="268.00" height="4.00" fill="url(#c46)" shape-rendering="crispEdges"/>
<rect x="417.40" y="1027.00" width="268.00" height="4.00" fill="url(#c47)" shape-rendering="crispEdges"/>
<rect x="417.40" y="1031.00" width="268.00" height="2.00" fill="url(#c48)" shape-rendering="crispEdges"/>
<polyline clip-path="url(#cclip)" points="753.3,830.7 737.3,839.7 721.9,848.5 707.2,857.0 693.1,865.4 679.6,873.6 666.6,881.5 654.2,889.3 642.3,896.8 630.8,904.2 619.8,911.4 609.2,918.3 599.0,925.1 589.2,931.7 579.7,938.2 570.6,944.5 561.9,950.6 553.4,956.5 545.2,962.3 537.4,968.0 529.7,973.5 522.4,978.8 515.3,984.0 508.4,989.1 501.8,994.1 495.4,998.9 489.2,1003.6 483.1,1008.2 477.3,1012.7 471.6,1017.0 466.2,1021.3 460.8,1025.5 455.7,1029.5 450.7,1033.5 445.8,1037.3 441.1,1041.1 436.5,1044.8 432.1,1048.3 427.8,1051.8 423.5,1055.3 419.4,1058.6 415.5,1061.9" fill="none" stroke="#000" stroke-width="3.2"/>
<rect x="417.40" y="839.00" width="268.00" height="194.00" fill="none" stroke="#8a8a8a" stroke-width="1.4"/>
<rect x="543.6" y="928" width="14.7" height="14.9" fill="#fff" stroke="#fff" stroke-width="3.4"/><rect x="543.6" y="928" width="14.7" height="14.9" fill="#fff" stroke="#000" stroke-width="1.7"/>
<circle cx="564.5" cy="934.3" r="5.9" fill="#fff"/><circle cx="564.5" cy="934.3" r="5.1" fill="#1c1c1c"/>
<circle cx="548.0" cy="936.4" r="4.1" fill="#4d4d4d" stroke="#111" stroke-width="1.4"/>
<circle cx="542.6" cy="947.4" r="4.1" fill="#333" stroke="#111" stroke-width="1.4"/>
<circle cx="552.9" cy="947.8" r="4.1" fill="#666" stroke="#111" stroke-width="1.4"/>
<circle cx="546.3" cy="950.2" r="4.1" fill="#808080" stroke="#111" stroke-width="1.4"/>
<circle cx="549.4" cy="946.0" r="4.1" fill="#b3b3b3" stroke="#111" stroke-width="1.4"/>
<circle cx="547.6" cy="944.4" r="4.1" fill="#e6e6e6" stroke="#111" stroke-width="1.4"/>
<circle cx="546.4" cy="941.9" r="4.1" fill="#ffffff" stroke="#111" stroke-width="1.4"/>
<line x1="411.00" y1="854.90" x2="417.40" y2="854.90" stroke="#dcdcdc" stroke-width="1.40" />
<line x1="411.00" y1="893.60" x2="417.40" y2="893.60" stroke="#dcdcdc" stroke-width="1.40" />
<line x1="411.00" y1="932.30" x2="417.40" y2="932.30" stroke="#dcdcdc" stroke-width="1.40" />
<line x1="411.00" y1="971.00" x2="417.40" y2="971.00" stroke="#dcdcdc" stroke-width="1.40" />
<line x1="411.00" y1="1009.70" x2="417.40" y2="1009.70" stroke="#dcdcdc" stroke-width="1.40" />
<line x1="428.60" y1="1033.60" x2="428.60" y2="1040.00" stroke="#dcdcdc" stroke-width="1.60" />
<line x1="482.10" y1="1033.60" x2="482.10" y2="1040.00" stroke="#dcdcdc" stroke-width="1.60" />
<line x1="535.60" y1="1033.60" x2="535.60" y2="1040.00" stroke="#dcdcdc" stroke-width="1.60" />
<line x1="589.10" y1="1033.60" x2="589.10" y2="1040.00" stroke="#dcdcdc" stroke-width="1.60" />
<line x1="642.60" y1="1033.60" x2="642.60" y2="1040.00" stroke="#dcdcdc" stroke-width="1.60" />
<circle cx="1564.5" cy="1145" r="7.5" fill="url(#gpc3)"/><path d="M1559.8 1147.2 h9.4 l-4.7 -5 Z" fill="#3a3a3a"/>
<circle cx="1849.6" cy="1151.3" r="10" fill="#2a2a2a"/>
<circle cx="1614.2" cy="1151.3" r="10" fill="url(#gpc3)"/>
<circle cx="1661.9" cy="1151.3" r="10" fill="url(#gpc3)"/>
<circle cx="1708.7" cy="1151.3" r="10" fill="url(#gpc3)"/>
<circle cx="1755.3" cy="1151.3" r="10" fill="url(#gpc3)"/>
<circle cx="1802.5" cy="1151.3" r="10" fill="url(#gpc3)"/>
<rect x="1610.2" y="1147.3" width="8" height="8" fill="#333333"/>
<path d="M1658.6 1146.2 L1667.4 1151.3 L1658.6 1156.4 Z" fill="#333333"/>
<path d="M1705.2 1146.4 h-2.2 v9.8 h2.2 M1712.2 1146.4 h2.2 v9.8 h-2.2" fill="none" stroke="#333333" stroke-width="1.8"/><rect x="1705.6" y="1150.5" width="1.7" height="1.7" fill="#333333"/><rect x="1709.9" y="1150.5" width="1.7" height="1.7" fill="#333333"/>
<path d="M1755.3 1151.3 c-1.6 -3 -5.6 -3 -5.6 0 c0 3 4 3 5.6 0 c1.6 -3 5.6 -3 5.6 0 c0 3 -4 3 -5.6 0 Z" fill="none" stroke="#333333" stroke-width="1.7"/>
<path d="M1797.6 1150.3 a5 5 0 0 1 8.6 -2.6 M1807.4 1152.3 a5 5 0 0 1 -8.6 2.6" fill="none" stroke="#333333" stroke-width="2"/><path d="M1808 1145 v4.4 h-4.4 Z M1797 1157.6 v-4.4 h4.4 Z" fill="#333333"/>
<circle cx="1622.4" cy="1183.4" r="10" fill="url(#gpc3)"/><circle cx="1843.8" cy="1183.4" r="10" fill="url(#gpc3)"/>
<path d="M1621.6 1179 l-3.6 4.4 l3.6 4.4 M1626.6 1179 l-3.6 4.4 l3.6 4.4" fill="none" stroke="#333333" stroke-width="1.6"/>
<path d="M1840.6 1179 l3.6 4.4 l-3.6 4.4 M1845.6 1179 l3.6 4.4 l-3.6 4.4" fill="none" stroke="#333333" stroke-width="1.6"/>
<g id="labels" text-rendering="geometricPrecision">
<text x="23.00" y="16.40" font-size="12.22" fill="#ffffff" style="white-space:pre;">Calman 2022 Calman Ultimate for Business 344 Days Remaining  - Untitled</text>
<text x="52.00" y="45.90" font-size="27.39" fill="#ffffff" stroke="#ffffff" stroke-width="0.30">calman</text>
<text x="36.50" y="81.70" font-size="12.29" fill="#e0e0e0">History 1</text>
<text x="107.20" y="83.00" font-size="11.50" fill="#949494" text-anchor="middle">+</text>
<text x="1291.50" y="71.80" font-size="10.99" fill="#f0f0f0" stroke="#f0f0f0" stroke-width="0.25">X-Rite i1Pro 3</text>
<text x="1291.50" y="88.00" font-size="11.41" fill="#f0f0f0" stroke="#f0f0f0" stroke-width="0.25">Direct View</text>
<text x="1415.00" y="80.20" font-size="9.29" fill="#ffffff" text-anchor="middle">696</text>
<text x="1446.60" y="71.80" font-size="11.23" fill="#f0f0f0" stroke="#f0f0f0" stroke-width="0.25">CalMAN Client 3 Pattern Generator</text>
<text x="1668.40" y="71.80" font-size="11.38" fill="#f0f0f0" stroke="#f0f0f0" stroke-width="0.25">Direct Display Control</text>
<text x="28.00" y="220.50" font-size="43.32" fill="#f2f2f2" letter-spacing="-0.833" stroke="#f2f2f2" stroke-width="0.30">Grayscale</text>
<text x="211.50" y="276.50" font-size="16.08" fill="#e6e6e6" text-anchor="middle" stroke="#e6e6e6" stroke-width="0.20">DeltaE 2000</text>
<text x="49.50" y="557.00" font-size="16.50" fill="#e6e6e6" text-anchor="end" stroke="#e6e6e6" stroke-width="0.20">0</text>
<text x="49.50" y="531.00" font-size="16.50" fill="#e6e6e6" text-anchor="end" stroke="#e6e6e6" stroke-width="0.20">10</text>
<text x="49.50" y="505.00" font-size="16.50" fill="#e6e6e6" text-anchor="end" stroke="#e6e6e6" stroke-width="0.20">20</text>
<text x="49.50" y="480.00" font-size="16.50" fill="#e6e6e6" text-anchor="end" stroke="#e6e6e6" stroke-width="0.20">30</text>
<text x="49.50" y="455.00" font-size="16.50" fill="#e6e6e6" text-anchor="end" stroke="#e6e6e6" stroke-width="0.20">40</text>
<text x="49.50" y="429.00" font-size="16.50" fill="#e6e6e6" text-anchor="end" stroke="#e6e6e6" stroke-width="0.20">50</text>
<text x="49.50" y="404.00" font-size="16.50" fill="#e6e6e6" text-anchor="end" stroke="#e6e6e6" stroke-width="0.20">60</text>
<text x="49.50" y="378.00" font-size="16.50" fill="#e6e6e6" text-anchor="end" stroke="#e6e6e6" stroke-width="0.20">70</text>
<text x="49.50" y="353.00" font-size="16.50" fill="#e6e6e6" text-anchor="end" stroke="#e6e6e6" stroke-width="0.20">80</text>
<text x="49.50" y="328.00" font-size="16.50" fill="#e6e6e6" text-anchor="end" stroke="#e6e6e6" stroke-width="0.20">90</text>
<text x="49.50" y="302.00" font-size="16.50" fill="#e6e6e6" text-anchor="end" stroke="#e6e6e6" stroke-width="0.20">100</text>
<text x="50.50" y="587.60" font-size="16.50" fill="#e6e6e6" text-anchor="middle" stroke="#e6e6e6" stroke-width="0.20">0</text>
<text x="96.80" y="587.60" font-size="16.50" fill="#e6e6e6" text-anchor="middle" stroke="#e6e6e6" stroke-width="0.20">2</text>
<text x="143.10" y="587.60" font-size="16.50" fill="#e6e6e6" text-anchor="middle" stroke="#e6e6e6" stroke-width="0.20">4</text>
<text x="189.40" y="587.60" font-size="16.50" fill="#e6e6e6" text-anchor="middle" stroke="#e6e6e6" stroke-width="0.20">6</text>
<text x="235.70" y="587.60" font-size="16.50" fill="#e6e6e6" text-anchor="middle" stroke="#e6e6e6" stroke-width="0.20">8</text>
<text x="282.00" y="587.60" font-size="16.50" fill="#e6e6e6" text-anchor="middle" stroke="#e6e6e6" stroke-width="0.20">10</text>
<text x="328.30" y="587.60" font-size="16.50" fill="#e6e6e6" text-anchor="middle" stroke="#e6e6e6" stroke-width="0.20">12</text>
<text x="374.60" y="587.60" font-size="16.50" fill="#e6e6e6" text-anchor="middle" stroke="#e6e6e6" stroke-width="0.20">14</text>
<text x="780.50" y="200.30" font-size="15.43" fill="#e6e6e6" text-anchor="middle">RGB Balance</text>
<text x="469.80" y="213.00" font-size="16.50" fill="#e6e6e6" text-anchor="end" stroke="#e6e6e6" stroke-width="0.20">120</text>
<text x="469.80" y="257.55" font-size="16.50" fill="#e6e6e6" text-anchor="end" stroke="#e6e6e6" stroke-width="0.20">115</text>
<text x="469.80" y="302.10" font-size="16.50" fill="#e6e6e6" text-anchor="end" stroke="#e6e6e6" stroke-width="0.20">110</text>
<text x="469.80" y="346.65" font-size="16.50" fill="#e6e6e6" text-anchor="end" stroke="#e6e6e6" stroke-width="0.20">105</text>
<text x="469.80" y="391.20" font-size="16.50" fill="#e6e6e6" text-anchor="end" stroke="#e6e6e6" stroke-width="0.20">100</text>
<text x="469.80" y="435.75" font-size="16.50" fill="#e6e6e6" text-anchor="end" stroke="#e6e6e6" stroke-width="0.20">95</text>
<text x="469.80" y="480.30" font-size="16.50" fill="#e6e6e6" text-anchor="end" stroke="#e6e6e6" stroke-width="0.20">90</text>
<text x="469.80" y="524.85" font-size="16.50" fill="#e6e6e6" text-anchor="end" stroke="#e6e6e6" stroke-width="0.20">85</text>
<text x="469.80" y="571.30" font-size="16.50" fill="#e6e6e6" text-anchor="end" stroke="#e6e6e6" stroke-width="0.20">80</text>
<text x="477.50" y="587.60" font-size="16.50" fill="#e6e6e6" text-anchor="middle" stroke="#e6e6e6" stroke-width="0.20">0</text>
<text x="539.50" y="587.60" font-size="16.50" fill="#e6e6e6" text-anchor="middle" stroke="#e6e6e6" stroke-width="0.20">10</text>
<text x="603.70" y="587.60" font-size="16.50" fill="#e6e6e6" text-anchor="middle" stroke="#e6e6e6" stroke-width="0.20">20</text>
<text x="667.90" y="587.60" font-size="16.50" fill="#e6e6e6" text-anchor="middle" stroke="#e6e6e6" stroke-width="0.20">30</text>
<text x="732.10" y="587.60" font-size="16.50" fill="#e6e6e6" text-anchor="middle" stroke="#e6e6e6" stroke-width="0.20">40</text>
<text x="796.30" y="587.60" font-size="16.50" fill="#e6e6e6" text-anchor="middle" stroke="#e6e6e6" stroke-width="0.20">50</text>
<text x="860.50" y="587.60" font-size="16.50" fill="#e6e6e6" text-anchor="middle" stroke="#e6e6e6" stroke-width="0.20">60</text>
<text x="924.70" y="587.60" font-size="16.50" fill="#e6e6e6" text-anchor="middle" stroke="#e6e6e6" stroke-width="0.20">70</text>
<text x="988.90" y="587.60" font-size="16.50" fill="#e6e6e6" text-anchor="middle" stroke="#e6e6e6" stroke-width="0.20">80</text>
<text x="1053.10" y="587.60" font-size="16.50" fill="#e6e6e6" text-anchor="middle" stroke="#e6e6e6" stroke-width="0.20">90</text>
<text x="1117.30" y="587.60" font-size="16.50" fill="#e6e6e6" text-anchor="middle" stroke="#e6e6e6" stroke-width="0.20">100</text>
<text x="1499.00" y="200.30" font-size="16.45" fill="#e6e6e6" text-anchor="middle" stroke="#e6e6e6" stroke-width="0.20">Gamma Log/Log</text>
<text x="1183.50" y="253.00" font-size="16.50" fill="#e6e6e6" text-anchor="end" stroke="#e6e6e6" stroke-width="0.20">2,4</text>
<text x="1183.50" y="297.44" font-size="16.50" fill="#e6e6e6" text-anchor="end" stroke="#e6e6e6" stroke-width="0.20">2,2</text>
<text x="1183.50" y="341.88" font-size="16.50" fill="#e6e6e6" text-anchor="end" stroke="#e6e6e6" stroke-width="0.20">2</text>
<text x="1183.50" y="386.32" font-size="16.50" fill="#e6e6e6" text-anchor="end" stroke="#e6e6e6" stroke-width="0.20">1,8</text>
<text x="1183.50" y="430.76" font-size="16.50" fill="#e6e6e6" text-anchor="end" stroke="#e6e6e6" stroke-width="0.20">1,6</text>
<text x="1183.50" y="475.20" font-size="16.50" fill="#e6e6e6" text-anchor="end" stroke="#e6e6e6" stroke-width="0.20">1,4</text>
<text x="1183.50" y="519.64" font-size="16.50" fill="#e6e6e6" text-anchor="end" stroke="#e6e6e6" stroke-width="0.20">1,2</text>
<text x="1183.50" y="564.08" font-size="16.50" fill="#e6e6e6" text-anchor="end" stroke="#e6e6e6" stroke-width="0.20">1</text>
<text x="1191.30" y="587.60" font-size="16.50" fill="#e6e6e6" text-anchor="middle" stroke="#e6e6e6" stroke-width="0.20">0</text>
<text x="1255.71" y="587.60" font-size="16.50" fill="#e6e6e6" text-anchor="middle" stroke="#e6e6e6" stroke-width="0.20">10</text>
<text x="1320.12" y="587.60" font-size="16.50" fill="#e6e6e6" text-anchor="middle" stroke="#e6e6e6" stroke-width="0.20">20</text>
<text x="1384.53" y="587.60" font-size="16.50" fill="#e6e6e6" text-anchor="middle" stroke="#e6e6e6" stroke-width="0.20">30</text>
<text x="1448.94" y="587.60" font-size="16.50" fill="#e6e6e6" text-anchor="middle" stroke="#e6e6e6" stroke-width="0.20">40</text>
<text x="1513.35" y="587.60" font-size="16.50" fill="#e6e6e6" text-anchor="middle" stroke="#e6e6e6" stroke-width="0.20">50</text>
<text x="1577.76" y="587.60" font-size="16.50" fill="#e6e6e6" text-anchor="middle" stroke="#e6e6e6" stroke-width="0.20">60</text>
<text x="1642.17" y="587.60" font-size="16.50" fill="#e6e6e6" text-anchor="middle" stroke="#e6e6e6" stroke-width="0.20">70</text>
<text x="1706.58" y="587.60" font-size="16.50" fill="#e6e6e6" text-anchor="middle" stroke="#e6e6e6" stroke-width="0.20">80</text>
<text x="1770.99" y="587.60" font-size="16.50" fill="#e6e6e6" text-anchor="middle" stroke="#e6e6e6" stroke-width="0.20">90</text>
<text x="1835.40" y="587.60" font-size="16.50" fill="#e6e6e6" text-anchor="middle" stroke="#e6e6e6" stroke-width="0.20">100</text>
<text x="97.30" y="634.20" font-size="34.26" fill="#f2f2f2" letter-spacing="-0.648" stroke="#f2f2f2" stroke-width="0.30">Avg dE2000: 2,5</text>
<text x="560.00" y="634.20" font-size="32.75" fill="#f2f2f2" letter-spacing="-0.650" stroke="#f2f2f2" stroke-width="0.30">Avg CCT: 6532</text>
<text x="961.50" y="634.20" font-size="35.19" fill="#f2f2f2" letter-spacing="-0.633" stroke="#f2f2f2" stroke-width="0.30">Contrast Ratio: 102378</text>
<text x="1473.20" y="634.20" font-size="35.12" fill="#f2f2f2" letter-spacing="-0.666" stroke="#f2f2f2" stroke-width="0.30">Total Gamma: 2,4</text>
<text x="354.90" y="794.80" font-size="13.70" fill="#f4f4f4" text-anchor="middle">0</text>
<text x="484.13" y="794.80" font-size="13.70" fill="#f4f4f4" text-anchor="middle">10</text>
<text x="613.36" y="794.80" font-size="13.70" fill="#f4f4f4" text-anchor="middle">20</text>
<text x="742.59" y="794.80" font-size="13.70" fill="#f4f4f4" text-anchor="middle">30</text>
<text x="871.82" y="794.80" font-size="13.70" fill="#f4f4f4" text-anchor="middle">40</text>
<text x="1001.05" y="794.80" font-size="13.70" fill="#f4f4f4" text-anchor="middle">50</text>
<text x="1130.28" y="794.80" font-size="13.70" fill="#f4f4f4" text-anchor="middle">60</text>
<text x="1259.51" y="794.80" font-size="13.70" fill="#f4f4f4" text-anchor="middle">70</text>
<text x="1388.74" y="794.80" font-size="13.70" fill="#f4f4f4" text-anchor="middle">80</text>
<text x="1517.97" y="794.80" font-size="13.70" fill="#f4f4f4" text-anchor="middle">90</text>
<text x="1647.20" y="794.80" font-size="13.70" fill="#f4f4f4" text-anchor="middle">100</text>
<text transform="translate(291,688.8) rotate(-90)" text-anchor="middle" font-size="13.7" fill="#f4f4f4">Actual</text>
<text transform="translate(291,753) rotate(-90)" text-anchor="middle" font-size="13.7" fill="#f4f4f4">Target</text>
<text x="17.10" y="864.20" font-size="34.72" fill="#f2f2f2" letter-spacing="-0.653" stroke="#f2f2f2" stroke-width="0.30">Current Reading</text>
<text x="17.10" y="911.30" font-size="29.42" fill="#f2f2f2" letter-spacing="-0.508" stroke="#f2f2f2" stroke-width="0.30">x: 0,3117</text>
<text x="17.10" y="957.00" font-size="29.15" fill="#f2f2f2" letter-spacing="-0.512" stroke="#f2f2f2" stroke-width="0.30">y: 0,3274</text>
<text x="17.10" y="1002.80" font-size="28.90" fill="#f2f2f2" letter-spacing="-0.494" stroke="#f2f2f2" stroke-width="0.30">fL: 120,23</text>
<text x="17.10" y="1048.50" font-size="30.75" fill="#f2f2f2" letter-spacing="-0.550" stroke="#f2f2f2" stroke-width="0.30">cd/m²: 411,94</text>
<text x="410.40" y="861.10" font-size="16.50" fill="#e6e6e6" text-anchor="end" stroke="#e6e6e6" stroke-width="0.20">0,35</text>
<text x="410.40" y="899.80" font-size="16.50" fill="#e6e6e6" text-anchor="end" stroke="#e6e6e6" stroke-width="0.20">0,34</text>
<text x="410.40" y="938.50" font-size="16.50" fill="#e6e6e6" text-anchor="end" stroke="#e6e6e6" stroke-width="0.20">0,33</text>
<text x="410.40" y="977.20" font-size="16.50" fill="#e6e6e6" text-anchor="end" stroke="#e6e6e6" stroke-width="0.20">0,32</text>
<text x="410.40" y="1015.90" font-size="16.50" fill="#e6e6e6" text-anchor="end" stroke="#e6e6e6" stroke-width="0.20">0,31</text>
<text x="428.60" y="1056.80" font-size="16.50" fill="#e6e6e6" text-anchor="middle" stroke="#e6e6e6" stroke-width="0.20">0,29</text>
<text x="482.10" y="1056.80" font-size="16.50" fill="#e6e6e6" text-anchor="middle" stroke="#e6e6e6" stroke-width="0.20">0,3</text>
<text x="535.60" y="1056.80" font-size="16.50" fill="#e6e6e6" text-anchor="middle" stroke="#e6e6e6" stroke-width="0.20">0,31</text>
<text x="589.10" y="1056.80" font-size="16.50" fill="#e6e6e6" text-anchor="middle" stroke="#e6e6e6" stroke-width="0.20">0,32</text>
<text x="642.60" y="1056.80" font-size="16.50" fill="#e6e6e6" text-anchor="middle" stroke="#e6e6e6" stroke-width="0.20">0,33</text>
<text x="872.00" y="836.10" font-size="17.90" fill="#ffffff" stroke="#ffffff" stroke-width="0.20">0</text>
<text x="946.00" y="836.10" font-size="17.90" fill="#ffffff" stroke="#ffffff" stroke-width="0.20">10</text>
<text x="1020.00" y="836.10" font-size="17.90" fill="#ffffff" stroke="#ffffff" stroke-width="0.20">20</text>
<text x="1094.00" y="836.10" font-size="17.90" fill="#ffffff" stroke="#ffffff" stroke-width="0.20">30</text>
<text x="1168.00" y="836.10" font-size="17.90" fill="#ffffff" stroke="#ffffff" stroke-width="0.20">40</text>
<text x="1242.00" y="836.10" font-size="17.90" fill="#ffffff" stroke="#ffffff" stroke-width="0.20">50</text>
<text x="1316.00" y="836.10" font-size="17.90" fill="#ffffff" stroke="#ffffff" stroke-width="0.20">60</text>
<text x="1390.00" y="836.10" font-size="17.90" fill="#ffffff" stroke="#ffffff" stroke-width="0.20">70</text>
<text x="1464.00" y="836.10" font-size="17.90" fill="#ffffff" stroke="#ffffff" stroke-width="0.20">80</text>
<text x="1538.00" y="836.10" font-size="17.90" fill="#ffffff" stroke="#ffffff" stroke-width="0.20">90</text>
<text x="1612.00" y="836.10" font-size="17.90" fill="#ffffff" stroke="#ffffff" stroke-width="0.20">100</text>
<text x="725.60" y="866.70" font-size="16.11" fill="#ffffff" stroke="#ffffff" stroke-width="0.20" style="letter-spacing:-0.023px">x: CIE31</text>
<text x="872.00" y="866.70" font-size="17.90" fill="#ffffff" stroke="#ffffff" stroke-width="0.20">0,38</text>
<text x="946.00" y="866.70" font-size="17.90" fill="#ffffff" stroke="#ffffff" stroke-width="0.20">0,32</text>
<text x="1020.00" y="866.70" font-size="17.90" fill="#ffffff" stroke="#ffffff" stroke-width="0.20">0,31</text>
<text x="1094.00" y="866.70" font-size="17.90" fill="#ffffff" stroke="#ffffff" stroke-width="0.20">0,31</text>
<text x="1168.00" y="866.70" font-size="17.90" fill="#ffffff" stroke="#ffffff" stroke-width="0.20">0,31</text>
<text x="1242.00" y="866.70" font-size="17.90" fill="#ffffff" stroke="#ffffff" stroke-width="0.20">0,31</text>
<text x="1316.00" y="866.70" font-size="17.90" fill="#ffffff" stroke="#ffffff" stroke-width="0.20">0,31</text>
<text x="1390.00" y="866.70" font-size="17.90" fill="#ffffff" stroke="#ffffff" stroke-width="0.20">0,31</text>
<text x="1464.00" y="866.70" font-size="17.90" fill="#ffffff" stroke="#ffffff" stroke-width="0.20">0,31</text>
<text x="1538.00" y="866.70" font-size="17.90" fill="#ffffff" stroke="#ffffff" stroke-width="0.20">0,31</text>
<text x="1612.00" y="866.70" font-size="17.90" fill="#ffffff" stroke="#ffffff" stroke-width="0.20">0,31</text>
<text x="725.60" y="895.63" font-size="16.11" fill="#f2f2f2" stroke="#f2f2f2" stroke-width="0.20" style="letter-spacing:0.000px">y: CIE31</text>
<text x="872.00" y="895.63" font-size="17.90" fill="#f2f2f2" stroke="#f2f2f2" stroke-width="0.20">0,21</text>
<text x="946.00" y="895.63" font-size="17.90" fill="#f2f2f2" stroke="#f2f2f2" stroke-width="0.20">0,33</text>
<text x="1020.00" y="895.63" font-size="17.90" fill="#f2f2f2" stroke="#f2f2f2" stroke-width="0.20">0,33</text>
<text x="1094.00" y="895.63" font-size="17.90" fill="#f2f2f2" stroke="#f2f2f2" stroke-width="0.20">0,33</text>
<text x="1168.00" y="895.63" font-size="17.90" fill="#f2f2f2" stroke="#f2f2f2" stroke-width="0.20">0,33</text>
<text x="1242.00" y="895.63" font-size="17.90" fill="#f2f2f2" stroke="#f2f2f2" stroke-width="0.20">0,33</text>
<text x="1316.00" y="895.63" font-size="17.90" fill="#f2f2f2" stroke="#f2f2f2" stroke-width="0.20">0,33</text>
<text x="1390.00" y="895.63" font-size="17.90" fill="#f2f2f2" stroke="#f2f2f2" stroke-width="0.20">0,33</text>
<text x="1464.00" y="895.63" font-size="17.90" fill="#f2f2f2" stroke="#f2f2f2" stroke-width="0.20">0,33</text>
<text x="1538.00" y="895.63" font-size="17.90" fill="#f2f2f2" stroke="#f2f2f2" stroke-width="0.20">0,33</text>
<text x="1612.00" y="895.63" font-size="17.90" fill="#f2f2f2" stroke="#f2f2f2" stroke-width="0.20">0,33</text>
<text x="725.60" y="924.56" font-size="16.11" fill="#ffffff" stroke="#ffffff" stroke-width="0.20" style="letter-spacing:-1.946px">Y</text>
<text x="872.00" y="924.56" font-size="17.90" fill="#ffffff" stroke="#ffffff" stroke-width="0.20">0,00</text>
<text x="946.00" y="924.56" font-size="17.90" fill="#ffffff" stroke="#ffffff" stroke-width="0.20">1,81</text>
<text x="1020.00" y="924.56" font-size="17.90" fill="#ffffff" stroke="#ffffff" stroke-width="0.20">8,79</text>
<text x="1094.00" y="924.56" font-size="17.90" fill="#ffffff" stroke="#ffffff" stroke-width="0.20">22,39</text>
<text x="1168.00" y="924.56" font-size="17.90" fill="#ffffff" stroke="#ffffff" stroke-width="0.20">45,89</text>
<text x="1242.00" y="924.56" font-size="17.90" fill="#ffffff" stroke="#ffffff" stroke-width="0.20">79,35</text>
<text x="1316.00" y="924.56" font-size="17.90" fill="#ffffff" stroke="#ffffff" stroke-width="0.20">121,20</text>
<text x="1390.00" y="924.56" font-size="17.90" fill="#ffffff" stroke="#ffffff" stroke-width="0.20">174,18</text>
<text x="1464.00" y="924.56" font-size="17.90" fill="#ffffff" stroke="#ffffff" stroke-width="0.20">241,38</text>
<text x="1538.00" y="924.56" font-size="17.90" fill="#ffffff" stroke="#ffffff" stroke-width="0.20">320,99</text>
<text x="1612.00" y="924.56" font-size="17.90" fill="#ffffff" stroke="#ffffff" stroke-width="0.20">411,94</text>
<text x="725.60" y="953.49" font-size="17.48" fill="#f2f2f2" stroke="#f2f2f2" stroke-width="0.20" style="letter-spacing:0.000px">Target Y</text>
<text x="872.00" y="953.49" font-size="17.90" fill="#f2f2f2" stroke="#f2f2f2" stroke-width="0.20">0,00</text>
<text x="946.00" y="953.49" font-size="17.90" fill="#f2f2f2" stroke="#f2f2f2" stroke-width="0.20">4,26</text>
<text x="1020.00" y="953.49" font-size="17.90" fill="#f2f2f2" stroke="#f2f2f2" stroke-width="0.20">13,64</text>
<text x="1094.00" y="953.49" font-size="17.90" fill="#f2f2f2" stroke="#f2f2f2" stroke-width="0.20">29,77</text>
<text x="1168.00" y="953.49" font-size="17.90" fill="#f2f2f2" stroke="#f2f2f2" stroke-width="0.20">54,73</text>
<text x="1242.00" y="953.49" font-size="17.90" fill="#f2f2f2" stroke="#f2f2f2" stroke-width="0.20">88,92</text>
<text x="1316.00" y="953.49" font-size="17.90" fill="#f2f2f2" stroke="#f2f2f2" stroke-width="0.20">131,22</text>
<text x="1390.00" y="953.49" font-size="17.90" fill="#f2f2f2" stroke="#f2f2f2" stroke-width="0.20">183,39</text>
<text x="1464.00" y="953.49" font-size="17.90" fill="#f2f2f2" stroke="#f2f2f2" stroke-width="0.20">248,74</text>
<text x="1538.00" y="953.49" font-size="17.90" fill="#f2f2f2" stroke="#f2f2f2" stroke-width="0.20">325,96</text>
<text x="1612.00" y="953.49" font-size="17.90" fill="#f2f2f2" stroke="#f2f2f2" stroke-width="0.20">411,94</text>
<text x="725.60" y="982.41" font-size="17.90" fill="#ffffff" stroke="#ffffff" stroke-width="0.20" style="letter-spacing:0.082px">Gamma Log/Log</text>
<text x="872.00" y="982.41" font-size="17.90" fill="#ffffff" stroke="#ffffff" stroke-width="0.20">1,28</text>
<text x="946.00" y="982.41" font-size="17.90" fill="#ffffff" stroke="#ffffff" stroke-width="0.20">2,38</text>
<text x="1020.00" y="982.41" font-size="17.90" fill="#ffffff" stroke="#ffffff" stroke-width="0.20">2,39</text>
<text x="1094.00" y="982.41" font-size="17.90" fill="#ffffff" stroke="#ffffff" stroke-width="0.20">2,41</text>
<text x="1168.00" y="982.41" font-size="17.90" fill="#ffffff" stroke="#ffffff" stroke-width="0.20">2,40</text>
<text x="1242.00" y="982.41" font-size="17.90" fill="#ffffff" stroke="#ffffff" stroke-width="0.20">2,39</text>
<text x="1316.00" y="982.41" font-size="17.90" fill="#ffffff" stroke="#ffffff" stroke-width="0.20">2,40</text>
<text x="1390.00" y="982.41" font-size="17.90" fill="#ffffff" stroke="#ffffff" stroke-width="0.20">2,39</text>
<text x="1464.00" y="982.41" font-size="17.90" fill="#ffffff" stroke="#ffffff" stroke-width="0.20">2,40</text>
<text x="1538.00" y="982.41" font-size="17.90" fill="#ffffff" stroke="#ffffff" stroke-width="0.20">2,42</text>
<text x="1612.00" y="982.41" font-size="17.90" fill="#ffffff" stroke="#ffffff" stroke-width="0.20">2,27</text>
<text x="725.60" y="1011.34" font-size="16.11" fill="#f2f2f2" stroke="#f2f2f2" stroke-width="0.20" style="letter-spacing:-0.903px">CCT</text>
<text x="872.00" y="1011.34" font-size="17.90" fill="#f2f2f2" stroke="#f2f2f2" stroke-width="0.20">2487,00</text>
<text x="946.00" y="1011.34" font-size="17.90" fill="#f2f2f2" stroke="#f2f2f2" stroke-width="0.20">6360,00</text>
<text x="1020.00" y="1011.34" font-size="17.90" fill="#f2f2f2" stroke="#f2f2f2" stroke-width="0.20">6607,00</text>
<text x="1094.00" y="1011.34" font-size="17.90" fill="#f2f2f2" stroke="#f2f2f2" stroke-width="0.20">6536,00</text>
<text x="1168.00" y="1011.34" font-size="17.90" fill="#f2f2f2" stroke="#f2f2f2" stroke-width="0.20">6516,00</text>
<text x="1242.00" y="1011.34" font-size="17.90" fill="#f2f2f2" stroke="#f2f2f2" stroke-width="0.20">6571,00</text>
<text x="1316.00" y="1011.34" font-size="17.90" fill="#f2f2f2" stroke="#f2f2f2" stroke-width="0.20">6520,00</text>
<text x="1390.00" y="1011.34" font-size="17.90" fill="#f2f2f2" stroke="#f2f2f2" stroke-width="0.20">6565,00</text>
<text x="1464.00" y="1011.34" font-size="17.90" fill="#f2f2f2" stroke="#f2f2f2" stroke-width="0.20">6524,00</text>
<text x="1538.00" y="1011.34" font-size="17.90" fill="#f2f2f2" stroke="#f2f2f2" stroke-width="0.20">6552,00</text>
<text x="1612.00" y="1011.34" font-size="17.90" fill="#f2f2f2" stroke="#f2f2f2" stroke-width="0.20">6569,00</text>
<text x="725.60" y="1040.27" font-size="16.94" fill="#ffffff" stroke="#ffffff" stroke-width="0.20" style="letter-spacing:0.000px">ΔE 2000</text>
<text x="872.00" y="1040.27" font-size="17.90" fill="#ffffff" stroke="#ffffff" stroke-width="0.20">0,05</text>
<text x="946.00" y="1040.27" font-size="17.90" fill="#ffffff" stroke="#ffffff" stroke-width="0.20">3,22</text>
<text x="1020.00" y="1040.27" font-size="17.90" fill="#ffffff" stroke="#ffffff" stroke-width="0.20">3,51</text>
<text x="1094.00" y="1040.27" font-size="17.90" fill="#ffffff" stroke="#ffffff" stroke-width="0.20">3,40</text>
<text x="1168.00" y="1040.27" font-size="17.90" fill="#ffffff" stroke="#ffffff" stroke-width="0.20">3,34</text>
<text x="1242.00" y="1040.27" font-size="17.90" fill="#ffffff" stroke="#ffffff" stroke-width="0.20">3,02</text>
<text x="1316.00" y="1040.27" font-size="17.90" fill="#ffffff" stroke="#ffffff" stroke-width="0.20">2,15</text>
<text x="1390.00" y="1040.27" font-size="17.90" fill="#ffffff" stroke="#ffffff" stroke-width="0.20">1,68</text>
<text x="1464.00" y="1040.27" font-size="17.90" fill="#ffffff" stroke="#ffffff" stroke-width="0.20">1,97</text>
<text x="1538.00" y="1040.27" font-size="17.90" fill="#ffffff" stroke="#ffffff" stroke-width="0.20">1,57</text>
<text x="1612.00" y="1040.27" font-size="17.90" fill="#ffffff" stroke="#ffffff" stroke-width="0.20">0,91</text>
<text x="70.00" y="1193.80" font-size="10.80" fill="#2e2e2e" text-anchor="middle" font-weight="bold">0</text>
<text x="209.90" y="1193.80" font-size="10.80" fill="#2e2e2e" text-anchor="middle" font-weight="bold">10</text>
<text x="349.80" y="1193.80" font-size="10.80" fill="#2e2e2e" text-anchor="middle" font-weight="bold">20</text>
<text x="489.70" y="1193.80" font-size="10.80" fill="#2e2e2e" text-anchor="middle" font-weight="bold">30</text>
<text x="629.60" y="1193.80" font-size="10.80" fill="#2e2e2e" text-anchor="middle" font-weight="bold">40</text>
<text x="769.50" y="1193.80" font-size="10.80" fill="#2e2e2e" text-anchor="middle" font-weight="bold">50</text>
<text x="909.40" y="1193.80" font-size="10.80" fill="#2e2e2e" text-anchor="middle" font-weight="bold">60</text>
<text x="1049.30" y="1193.80" font-size="10.80" fill="#2e2e2e" text-anchor="middle" font-weight="bold">70</text>
<text x="1189.20" y="1193.80" font-size="10.80" fill="#2e2e2e" text-anchor="middle" font-weight="bold">80</text>
<text x="1329.10" y="1193.80" font-size="10.80" fill="#2e2e2e" text-anchor="middle" font-weight="bold">90</text>
<text x="1469.00" y="1193.80" font-size="10.80" fill="#ffffff" text-anchor="middle" font-weight="bold">100</text>
<text x="1650.10" y="1191.40" font-size="23.25" fill="#2c2c2c" stroke="#2c2c2c" stroke-width="0.80">Back</text>
<text x="1761.70" y="1191.40" font-size="25.53" fill="#2c2c2c" stroke="#2c2c2c" stroke-width="0.80">Next</text>
</g></svg>

</div></body></html>
